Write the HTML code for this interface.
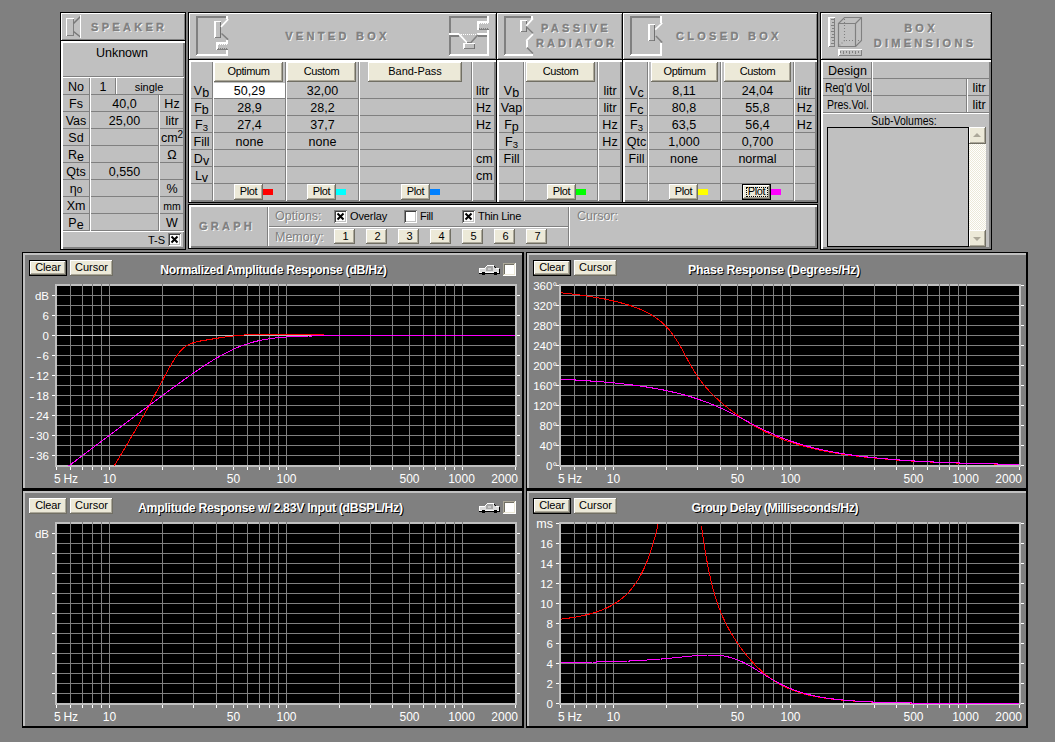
<!DOCTYPE html><html><head><meta charset="utf-8"><title>Speaker Box</title><style>
html,body{margin:0;padding:0}
body{width:1055px;height:742px;background:#808080;position:relative;overflow:hidden;font-family:"Liberation Sans", sans-serif;}
body>div,body>svg{position:absolute;}
.t{white-space:nowrap;letter-spacing:0;overflow:visible}
.sub{position:relative;top:2px}
.sup{font-size:10px;position:relative;top:-4px}
.gt{font-weight:bold;font-size:12.3px;color:#fff;text-shadow:1px 1px 0 #000;text-align:left}
.mn{display:inline-block;transform:scaleX(1.4);margin-right:2px}
.sb{position:relative;top:1.5px}
.sb3{font-size:9.5px;position:relative;top:2px}
</style></head><body>
<div style="left:60px;top:12px;width:126px;height:29px;background:#000;"></div>
<div style="left:61px;top:13px;width:124px;height:27px;background:#c0c0c0;"></div>
<div style="left:61px;top:13px;width:124px;height:1px;background:#fff;"></div>
<div style="left:61px;top:13px;width:1px;height:27px;background:#fff;"></div>
<div style="left:62px;top:39px;width:123px;height:1px;background:#808080;"></div>
<div style="left:184px;top:14px;width:1px;height:26px;background:#808080;"></div>
<svg style="left:64px;top:13px" width="20" height="26" viewBox="0 0 20 26" shape-rendering="crispEdges">
<path d="M2.5,22.5V5.5H9.5" stroke="#fff" fill="none"/><path d="M2.5,22.5H9.5V5.5" stroke="#808080" fill="none"/>
<path d="M9.5,10.5L16.5,3.5M9.5,18.5L16.5,24" stroke="#787878" stroke-width="1.5" fill="none" shape-rendering="auto"/>
<path d="M16.5,2V25" stroke="#fff" fill="none"/></svg>
<div class="t " style="left:91px;top:14px;width:98px;height:27px;line-height:27px;text-align:left;font-size:11px;color:#808080;font-weight:bold;letter-spacing:3.3px;text-shadow:1px 1px 0 #fff;-webkit-text-stroke:0.35px #808080;">SPEAKER</div>
<div style="left:60px;top:40px;width:126px;height:210px;background:#000;"></div>
<div style="left:61px;top:41px;width:124px;height:208px;background:#c0c0c0;"></div>
<div style="left:61px;top:41px;width:124px;height:2px;background:#fff;"></div>
<div style="left:61px;top:41px;width:2px;height:208px;background:#fff;"></div>
<div style="left:63px;top:247px;width:122px;height:2px;background:#808080;"></div>
<div style="left:183px;top:43px;width:2px;height:206px;background:#808080;"></div>
<div class="t " style="left:62px;top:44px;width:120px;height:18px;line-height:18px;text-align:center;font-size:12.5px;color:#000;">Unknown</div>
<div style="left:63px;top:76px;width:121px;height:1px;background:#808080;"></div>
<div style="left:63px;top:77px;width:121px;height:1px;background:#fff;"></div>
<div class="t " style="left:63px;top:79px;width:26px;height:16px;line-height:16px;text-align:center;font-size:12.5px;color:#000;">No</div>
<div style="left:63px;top:94px;width:121px;height:1px;background:#808080;"></div>
<div class="t " style="left:63px;top:96px;width:26px;height:16px;line-height:16px;text-align:center;font-size:12.5px;color:#000;">Fs</div>
<div style="left:63px;top:111px;width:121px;height:1px;background:#808080;"></div>
<div class="t " style="left:91px;top:96px;width:67px;height:16px;line-height:16px;text-align:center;font-size:12.5px;color:#000;">40,0</div>
<div class="t " style="left:160px;top:96px;width:24px;height:16px;line-height:16px;text-align:center;font-size:12.5px;color:#000;">Hz</div>
<div class="t " style="left:63px;top:113px;width:26px;height:16px;line-height:16px;text-align:center;font-size:12.5px;color:#000;">Vas</div>
<div style="left:63px;top:128px;width:121px;height:1px;background:#808080;"></div>
<div class="t " style="left:91px;top:113px;width:67px;height:16px;line-height:16px;text-align:center;font-size:12.5px;color:#000;">25,00</div>
<div class="t " style="left:160px;top:113px;width:24px;height:16px;line-height:16px;text-align:center;font-size:12.5px;color:#000;">litr</div>
<div class="t " style="left:63px;top:130px;width:26px;height:16px;line-height:16px;text-align:center;font-size:12.5px;color:#000;">Sd</div>
<div style="left:63px;top:145px;width:121px;height:1px;background:#808080;"></div>
<div class="t " style="left:160px;top:130px;width:24px;height:16px;line-height:16px;text-align:center;font-size:12.5px;color:#000;">cm<span class="sup">2</span></div>
<div class="t " style="left:63px;top:147px;width:26px;height:16px;line-height:16px;text-align:center;font-size:12.5px;color:#000;">R<span class="sub">e</span></div>
<div style="left:63px;top:162px;width:121px;height:1px;background:#808080;"></div>
<div class="t " style="left:160px;top:147px;width:24px;height:16px;line-height:16px;text-align:center;font-size:12.5px;color:#000;">&Omega;</div>
<div class="t " style="left:63px;top:164px;width:26px;height:16px;line-height:16px;text-align:center;font-size:12.5px;color:#000;">Qts</div>
<div style="left:63px;top:179px;width:121px;height:1px;background:#808080;"></div>
<div class="t " style="left:91px;top:164px;width:67px;height:16px;line-height:16px;text-align:center;font-size:12.5px;color:#000;">0,550</div>
<div class="t " style="left:63px;top:181px;width:26px;height:16px;line-height:16px;text-align:center;font-size:12.5px;color:#000;">&eta;<span style="font-size:10px">o</span></div>
<div style="left:63px;top:196px;width:121px;height:1px;background:#808080;"></div>
<div class="t " style="left:160px;top:181px;width:24px;height:16px;line-height:16px;text-align:center;font-size:12.5px;color:#000;">%</div>
<div class="t " style="left:63px;top:198px;width:26px;height:16px;line-height:16px;text-align:center;font-size:12.5px;color:#000;">Xm</div>
<div style="left:63px;top:213px;width:121px;height:1px;background:#808080;"></div>
<div class="t " style="left:160px;top:198px;width:24px;height:16px;line-height:16px;text-align:center;font-size:10.5px;color:#000;">mm</div>
<div class="t " style="left:63px;top:215px;width:26px;height:16px;line-height:16px;text-align:center;font-size:12.5px;color:#000;">P<span class="sub">e</span></div>
<div style="left:63px;top:230px;width:121px;height:1px;background:#808080;"></div>
<div class="t " style="left:160px;top:215px;width:24px;height:16px;line-height:16px;text-align:center;font-size:12.5px;color:#000;">W</div>
<div style="left:89px;top:78px;width:1px;height:153px;background:#808080;"></div>
<div style="left:90px;top:78px;width:1px;height:153px;background:#fff;"></div>
<div class="t " style="left:91px;top:79px;width:24px;height:16px;line-height:16px;text-align:center;font-size:12.5px;color:#000;">1</div>
<div style="left:115px;top:78px;width:1px;height:16px;background:#808080;"></div>
<div style="left:116px;top:78px;width:1px;height:16px;background:#fff;"></div>
<div class="t " style="left:116px;top:79px;width:66px;height:16px;line-height:16px;text-align:center;font-size:11px;color:#000;">single</div>
<div style="left:158px;top:95px;width:1px;height:136px;background:#808080;"></div>
<div style="left:159px;top:95px;width:1px;height:136px;background:#fff;"></div>
<div style="left:63px;top:231px;width:121px;height:1px;background:#fff;"></div>
<div class="t " style="left:119px;top:232px;width:46px;height:16px;line-height:16px;text-align:right;font-size:11px;color:#000;">T-S</div>
<div style="left:168px;top:233px;width:13px;height:13px;background:#808080;"></div>
<div style="left:169px;top:234px;width:12px;height:12px;background:#fff;"></div>
<div style="left:169px;top:234px;width:11px;height:11px;background:#404040;"></div>
<div style="left:170px;top:235px;width:10px;height:10px;background:#c0c0c0;"></div>
<div style="left:170px;top:235px;width:9px;height:9px;background:#fff;"></div>
<svg style="left:170px;top:235px" width="9" height="9" viewBox="0 0 9 9"><path d="M1.5,1.5L7.5,7.5M7.5,1.5L1.5,7.5" stroke="#000" stroke-width="2" fill="none"/></svg>
<div style="left:188px;top:12px;width:309px;height:48px;background:#000;"></div>
<div style="left:189px;top:13px;width:307px;height:46px;background:#c0c0c0;"></div>
<div style="left:189px;top:13px;width:307px;height:1px;background:#fff;"></div>
<div style="left:189px;top:13px;width:1px;height:46px;background:#fff;"></div>
<div style="left:190px;top:58px;width:306px;height:1px;background:#808080;"></div>
<div style="left:495px;top:14px;width:1px;height:45px;background:#808080;"></div>
<svg style="left:193px;top:13px" width="38" height="44" viewBox="0 0 38 44" shape-rendering="crispEdges"><rect x="3" y="3" width="2" height="40" fill="#808080"/><rect x="3" y="3" width="31" height="2" fill="#808080"/><rect x="4" y="41" width="31" height="2" fill="#fff"/><rect x="3" y="42" width="1" height="1" fill="#fff"/><rect x="33" y="3" width="2" height="3" fill="#fff"/><rect x="33" y="37" width="2" height="6" fill="#fff"/><rect x="33" y="27" width="2" height="3" fill="#fff"/><rect x="23" y="29" width="12" height="2" fill="#fff"/><rect x="23" y="29" width="2" height="8" fill="#fff"/><rect x="25" y="31" width="1" height="1" fill="#fff"/><rect x="27" y="31" width="1" height="1" fill="#fff"/><rect x="29" y="31" width="1" height="1" fill="#fff"/><rect x="31" y="31" width="1" height="1" fill="#fff"/><rect x="33" y="31" width="1" height="1" fill="#fff"/><rect x="25" y="35" width="1" height="1" fill="#808080"/><rect x="27" y="35" width="1" height="1" fill="#808080"/><rect x="29" y="35" width="1" height="1" fill="#808080"/><rect x="31" y="35" width="1" height="1" fill="#808080"/><rect x="33" y="35" width="1" height="1" fill="#808080"/><rect x="24" y="36" width="11" height="1" fill="#808080"/><rect x="21" y="8" width="7" height="1.4" fill="#fff"/><rect x="21" y="8" width="1.5" height="17" fill="#fff"/><rect x="22" y="23.5" width="6" height="1.5" fill="#808080"/><rect x="27" y="9" width="1" height="16" fill="#707070"/><path d="M28,13.8L35.2,6.2" stroke="#fff" stroke-width="1.7" fill="none" shape-rendering="auto"/><path d="M28.5,20.5L35.2,26.6" stroke="#808080" stroke-width="1.5" fill="none" shape-rendering="auto"/></svg>
<svg style="left:447px;top:13px" width="44" height="44" viewBox="0 0 44 44" shape-rendering="crispEdges"><rect x="2" y="3" width="2" height="40" fill="#808080"/><rect x="2" y="3" width="39" height="2" fill="#808080"/><rect x="3" y="41" width="39" height="2" fill="#fff"/><rect x="2" y="42" width="1" height="1" fill="#fff"/><rect x="40" y="3" width="2" height="5" fill="#fff"/><rect x="40" y="17" width="2" height="26" fill="#fff"/><rect x="30" y="8" width="12" height="2" fill="#fff"/><rect x="30" y="8" width="2" height="9" fill="#fff"/><rect x="32" y="10" width="1" height="1" fill="#fff"/><rect x="34" y="10" width="1" height="1" fill="#fff"/><rect x="36" y="10" width="1" height="1" fill="#fff"/><rect x="38" y="10" width="1" height="1" fill="#fff"/><rect x="40" y="10" width="1" height="1" fill="#fff"/><rect x="32" y="15" width="1" height="1" fill="#808080"/><rect x="34" y="15" width="1" height="1" fill="#808080"/><rect x="36" y="15" width="1" height="1" fill="#808080"/><rect x="38" y="15" width="1" height="1" fill="#808080"/><rect x="40" y="15" width="1" height="1" fill="#808080"/><rect x="32" y="16" width="10" height="1" fill="#808080"/><rect x="2" y="20" width="10" height="2" fill="#fff"/><rect x="30" y="20" width="12" height="2" fill="#fff"/><rect x="12" y="21" width="1" height="1" fill="#fff"/><rect x="14" y="21" width="1" height="1" fill="#fff"/><rect x="16" y="21" width="1" height="1" fill="#fff"/><rect x="18" y="21" width="1" height="1" fill="#fff"/><rect x="20" y="21" width="1" height="1" fill="#fff"/><rect x="22" y="21" width="1" height="1" fill="#fff"/><rect x="24" y="21" width="1" height="1" fill="#fff"/><rect x="26" y="21" width="1" height="1" fill="#fff"/><rect x="28" y="21" width="1" height="1" fill="#fff"/><rect x="4" y="22" width="8" height="2" fill="#808080"/><rect x="31" y="22" width="9" height="2" fill="#808080"/><path d="M12.1,21.2L20.3,30" stroke="#fff" stroke-width="1.7" fill="none" shape-rendering="auto"/><path d="M30.8,22L24,29.6" stroke="#808080" stroke-width="1.5" fill="none" shape-rendering="auto"/><rect x="20" y="29" width="5" height="1" fill="#808080"/><rect x="16" y="30" width="12" height="1.4" fill="#fff"/><rect x="16" y="30" width="1.5" height="6" fill="#fff"/><rect x="17" y="34.5" width="11" height="1.5" fill="#808080"/><rect x="27" y="31" width="1" height="5" fill="#707070"/></svg>
<div class="t " style="left:183px;top:13.5px;width:309px;height:44px;line-height:44px;text-align:center;font-size:11px;color:#808080;font-weight:bold;letter-spacing:3.3px;text-shadow:1px 1px 0 #fff;-webkit-text-stroke:0.35px #808080;">VENTED BOX</div>
<div style="left:188px;top:59px;width:309px;height:144px;background:#000;"></div>
<div style="left:189px;top:60px;width:307px;height:142px;background:#c0c0c0;"></div>
<div style="left:189px;top:60px;width:307px;height:2px;background:#fff;"></div>
<div style="left:189px;top:60px;width:2px;height:142px;background:#fff;"></div>
<div style="left:191px;top:200px;width:305px;height:2px;background:#808080;"></div>
<div style="left:494px;top:62px;width:2px;height:140px;background:#808080;"></div>
<div style="left:191px;top:98px;width:304px;height:1px;background:#808080;"></div>
<div style="left:191px;top:115px;width:304px;height:1px;background:#808080;"></div>
<div style="left:191px;top:132px;width:304px;height:1px;background:#808080;"></div>
<div style="left:191px;top:149px;width:304px;height:1px;background:#808080;"></div>
<div style="left:191px;top:166px;width:304px;height:1px;background:#808080;"></div>
<div style="left:191px;top:183px;width:304px;height:1px;background:#808080;"></div>
<div style="left:212px;top:62px;width:1px;height:139px;background:#808080;"></div>
<div style="left:213px;top:62px;width:1px;height:139px;background:#fff;"></div>
<div style="left:285px;top:62px;width:1px;height:139px;background:#808080;"></div>
<div style="left:286px;top:62px;width:1px;height:139px;background:#fff;"></div>
<div style="left:358px;top:62px;width:1px;height:139px;background:#808080;"></div>
<div style="left:359px;top:62px;width:1px;height:139px;background:#fff;"></div>
<div style="left:471px;top:62px;width:1px;height:139px;background:#808080;"></div>
<div style="left:472px;top:62px;width:1px;height:139px;background:#fff;"></div>
<div style="left:214px;top:62px;width:69px;height:20px;background:#716f64;"></div>
<div style="left:214px;top:62px;width:68px;height:19px;background:#fff;"></div>
<div style="left:215px;top:63px;width:67px;height:18px;background:#aca899;"></div>
<div style="left:215px;top:63px;width:66px;height:17px;background:#ece9d8;"></div>
<div class="t " style="left:214px;top:62px;width:69px;height:19px;line-height:19px;text-align:center;font-size:11px;color:#000;letter-spacing:-0.4px">Optimum</div>
<div style="left:287px;top:62px;width:69px;height:20px;background:#716f64;"></div>
<div style="left:287px;top:62px;width:68px;height:19px;background:#fff;"></div>
<div style="left:288px;top:63px;width:67px;height:18px;background:#aca899;"></div>
<div style="left:288px;top:63px;width:66px;height:17px;background:#ece9d8;"></div>
<div class="t " style="left:287px;top:62px;width:69px;height:19px;line-height:19px;text-align:center;font-size:11px;color:#000;letter-spacing:-0.4px">Custom</div>
<div style="left:368px;top:62px;width:94px;height:20px;background:#716f64;"></div>
<div style="left:368px;top:62px;width:93px;height:19px;background:#fff;"></div>
<div style="left:369px;top:63px;width:92px;height:18px;background:#aca899;"></div>
<div style="left:369px;top:63px;width:91px;height:17px;background:#ece9d8;"></div>
<div class="t " style="left:368px;top:62px;width:94px;height:19px;line-height:19px;text-align:center;font-size:11px;color:#000;letter-spacing:-0.05px">Band-Pass</div>
<div style="left:214px;top:83px;width:71px;height:15px;background:#fff;"></div>
<div class="t " style="left:191px;top:83px;width:21px;height:16px;line-height:16px;text-align:center;font-size:12.5px;color:#000;">V<span class="sb">b</span></div>
<div class="t " style="left:214px;top:83px;width:71px;height:16px;line-height:16px;text-align:center;font-size:12.5px;color:#000;">50,29</div>
<div class="t " style="left:287px;top:83px;width:71px;height:16px;line-height:16px;text-align:center;font-size:12.5px;color:#000;">32,00</div>
<div class="t " style="left:476px;top:83px;width:22px;height:16px;line-height:16px;text-align:left;font-size:12.5px;color:#000;">litr</div>
<div class="t " style="left:191px;top:100px;width:21px;height:16px;line-height:16px;text-align:center;font-size:12.5px;color:#000;">F<span class="sb">b</span></div>
<div class="t " style="left:214px;top:100px;width:71px;height:16px;line-height:16px;text-align:center;font-size:12.5px;color:#000;">28,9</div>
<div class="t " style="left:287px;top:100px;width:71px;height:16px;line-height:16px;text-align:center;font-size:12.5px;color:#000;">28,2</div>
<div class="t " style="left:476px;top:100px;width:22px;height:16px;line-height:16px;text-align:left;font-size:12.5px;color:#000;">Hz</div>
<div class="t " style="left:191px;top:117px;width:21px;height:16px;line-height:16px;text-align:center;font-size:12.5px;color:#000;">F<span class="sb3">3</span></div>
<div class="t " style="left:214px;top:117px;width:71px;height:16px;line-height:16px;text-align:center;font-size:12.5px;color:#000;">27,4</div>
<div class="t " style="left:287px;top:117px;width:71px;height:16px;line-height:16px;text-align:center;font-size:12.5px;color:#000;">37,7</div>
<div class="t " style="left:476px;top:117px;width:22px;height:16px;line-height:16px;text-align:left;font-size:12.5px;color:#000;">Hz</div>
<div class="t " style="left:191px;top:134px;width:21px;height:16px;line-height:16px;text-align:center;font-size:12.5px;color:#000;">Fill</div>
<div class="t " style="left:214px;top:134px;width:71px;height:16px;line-height:16px;text-align:center;font-size:12.5px;color:#000;">none</div>
<div class="t " style="left:287px;top:134px;width:71px;height:16px;line-height:16px;text-align:center;font-size:12.5px;color:#000;">none</div>
<div class="t " style="left:191px;top:151px;width:21px;height:16px;line-height:16px;text-align:center;font-size:12.5px;color:#000;">D<span class="sb">v</span></div>
<div class="t " style="left:476px;top:151px;width:22px;height:16px;line-height:16px;text-align:left;font-size:12.5px;color:#000;">cm</div>
<div class="t " style="left:191px;top:168px;width:21px;height:16px;line-height:16px;text-align:center;font-size:12.5px;color:#000;">L<span class="sb">v</span></div>
<div class="t " style="left:476px;top:168px;width:22px;height:16px;line-height:16px;text-align:left;font-size:12.5px;color:#000;">cm</div>
<div style="left:234px;top:184px;width:29px;height:16px;background:#716f64;"></div>
<div style="left:234px;top:184px;width:28px;height:15px;background:#fff;"></div>
<div style="left:235px;top:185px;width:27px;height:14px;background:#aca899;"></div>
<div style="left:235px;top:185px;width:26px;height:13px;background:#ece9d8;"></div>
<div class="t " style="left:234px;top:184px;width:29px;height:15px;line-height:15px;text-align:center;font-size:11px;color:#000;letter-spacing:-0.4px">Plot</div>
<div style="left:263px;top:189px;width:10px;height:6px;background:#ff0000;"></div>
<div style="left:307px;top:184px;width:29px;height:16px;background:#716f64;"></div>
<div style="left:307px;top:184px;width:28px;height:15px;background:#fff;"></div>
<div style="left:308px;top:185px;width:27px;height:14px;background:#aca899;"></div>
<div style="left:308px;top:185px;width:26px;height:13px;background:#ece9d8;"></div>
<div class="t " style="left:307px;top:184px;width:29px;height:15px;line-height:15px;text-align:center;font-size:11px;color:#000;letter-spacing:-0.4px">Plot</div>
<div style="left:336px;top:189px;width:10px;height:6px;background:#00ffff;"></div>
<div style="left:401px;top:184px;width:29px;height:16px;background:#716f64;"></div>
<div style="left:401px;top:184px;width:28px;height:15px;background:#fff;"></div>
<div style="left:402px;top:185px;width:27px;height:14px;background:#aca899;"></div>
<div style="left:402px;top:185px;width:26px;height:13px;background:#ece9d8;"></div>
<div class="t " style="left:401px;top:184px;width:29px;height:15px;line-height:15px;text-align:center;font-size:11px;color:#000;letter-spacing:-0.4px">Plot</div>
<div style="left:430px;top:189px;width:10px;height:6px;background:#0080ff;"></div>
<div style="left:496px;top:12px;width:127px;height:48px;background:#000;"></div>
<div style="left:497px;top:13px;width:125px;height:46px;background:#c0c0c0;"></div>
<div style="left:497px;top:13px;width:125px;height:1px;background:#fff;"></div>
<div style="left:497px;top:13px;width:1px;height:46px;background:#fff;"></div>
<div style="left:498px;top:58px;width:124px;height:1px;background:#808080;"></div>
<div style="left:621px;top:14px;width:1px;height:45px;background:#808080;"></div>
<svg style="left:502px;top:13px" width="34" height="44" viewBox="0 0 34 44" shape-rendering="crispEdges"><rect x="2" y="3" width="2" height="40" fill="#808080"/><rect x="2" y="3" width="28" height="2" fill="#808080"/><rect x="3" y="41" width="28" height="2" fill="#fff"/><rect x="2" y="42" width="1" height="1" fill="#fff"/><rect x="29" y="3" width="2" height="3" fill="#fff"/><rect x="18" y="7" width="7" height="1.4" fill="#fff"/><rect x="18" y="7" width="1.5" height="12" fill="#fff"/><rect x="19" y="17.5" width="6" height="1.5" fill="#808080"/><rect x="24" y="8" width="1" height="11" fill="#707070"/><path d="M24.2,12.8L31,5.4" stroke="#fff" stroke-width="1.7" fill="none" shape-rendering="auto"/><path d="M24.8,14.2L31,20.2" stroke="#808080" stroke-width="1.5" fill="none" shape-rendering="auto"/><path d="M31,21.2L24.2,27.8" stroke="#fff" stroke-width="1.7" fill="none" shape-rendering="auto"/><rect x="24" y="28" width="1.5" height="7" fill="#fff"/><path d="M25,34.5L31,40.5" stroke="#808080" stroke-width="1.5" fill="none" shape-rendering="auto"/></svg>
<div class="t " style="left:541px;top:20px;width:84px;height:16px;line-height:16px;text-align:left;font-size:11px;color:#808080;font-weight:bold;letter-spacing:3.3px;text-shadow:1px 1px 0 #fff;-webkit-text-stroke:0.35px #808080;">PASSIVE</div>
<div class="t " style="left:536px;top:35px;width:84px;height:16px;line-height:16px;text-align:left;font-size:11px;color:#808080;font-weight:bold;letter-spacing:3.0px;text-shadow:1px 1px 0 #fff;-webkit-text-stroke:0.35px #808080;">RADIATOR</div>
<div style="left:496px;top:59px;width:127px;height:144px;background:#000;"></div>
<div style="left:497px;top:60px;width:125px;height:142px;background:#c0c0c0;"></div>
<div style="left:497px;top:60px;width:125px;height:2px;background:#fff;"></div>
<div style="left:497px;top:60px;width:2px;height:142px;background:#fff;"></div>
<div style="left:499px;top:200px;width:123px;height:2px;background:#808080;"></div>
<div style="left:620px;top:62px;width:2px;height:140px;background:#808080;"></div>
<div style="left:499px;top:98px;width:121px;height:1px;background:#808080;"></div>
<div style="left:499px;top:115px;width:121px;height:1px;background:#808080;"></div>
<div style="left:499px;top:132px;width:121px;height:1px;background:#808080;"></div>
<div style="left:499px;top:149px;width:121px;height:1px;background:#808080;"></div>
<div style="left:499px;top:166px;width:121px;height:1px;background:#808080;"></div>
<div style="left:499px;top:183px;width:121px;height:1px;background:#808080;"></div>
<div style="left:523px;top:62px;width:1px;height:139px;background:#808080;"></div>
<div style="left:524px;top:62px;width:1px;height:139px;background:#fff;"></div>
<div style="left:597px;top:62px;width:1px;height:139px;background:#808080;"></div>
<div style="left:598px;top:62px;width:1px;height:139px;background:#fff;"></div>
<div style="left:526px;top:62px;width:69px;height:20px;background:#716f64;"></div>
<div style="left:526px;top:62px;width:68px;height:19px;background:#fff;"></div>
<div style="left:527px;top:63px;width:67px;height:18px;background:#aca899;"></div>
<div style="left:527px;top:63px;width:66px;height:17px;background:#ece9d8;"></div>
<div class="t " style="left:526px;top:62px;width:69px;height:19px;line-height:19px;text-align:center;font-size:11px;color:#000;letter-spacing:-0.4px">Custom</div>
<div class="t " style="left:500px;top:83px;width:23px;height:16px;line-height:16px;text-align:center;font-size:12.5px;color:#000;">V<span class="sb">b</span></div>
<div class="t " style="left:599px;top:83px;width:22px;height:16px;line-height:16px;text-align:center;font-size:12.5px;color:#000;">litr</div>
<div class="t " style="left:500px;top:100px;width:23px;height:16px;line-height:16px;text-align:center;font-size:12.5px;color:#000;">Vap</div>
<div class="t " style="left:599px;top:100px;width:22px;height:16px;line-height:16px;text-align:center;font-size:12.5px;color:#000;">litr</div>
<div class="t " style="left:500px;top:117px;width:23px;height:16px;line-height:16px;text-align:center;font-size:12.5px;color:#000;">F<span class="sb">p</span></div>
<div class="t " style="left:599px;top:117px;width:22px;height:16px;line-height:16px;text-align:center;font-size:12.5px;color:#000;">Hz</div>
<div class="t " style="left:500px;top:134px;width:23px;height:16px;line-height:16px;text-align:center;font-size:12.5px;color:#000;">F<span class="sb3">3</span></div>
<div class="t " style="left:599px;top:134px;width:22px;height:16px;line-height:16px;text-align:center;font-size:12.5px;color:#000;">Hz</div>
<div class="t " style="left:500px;top:151px;width:23px;height:16px;line-height:16px;text-align:center;font-size:12.5px;color:#000;">Fill</div>
<div style="left:547px;top:184px;width:29px;height:16px;background:#716f64;"></div>
<div style="left:547px;top:184px;width:28px;height:15px;background:#fff;"></div>
<div style="left:548px;top:185px;width:27px;height:14px;background:#aca899;"></div>
<div style="left:548px;top:185px;width:26px;height:13px;background:#ece9d8;"></div>
<div class="t " style="left:547px;top:184px;width:29px;height:15px;line-height:15px;text-align:center;font-size:11px;color:#000;letter-spacing:-0.4px">Plot</div>
<div style="left:576px;top:189px;width:10px;height:6px;background:#00ff00;"></div>
<div style="left:622px;top:12px;width:196px;height:48px;background:#000;"></div>
<div style="left:623px;top:13px;width:194px;height:46px;background:#c0c0c0;"></div>
<div style="left:623px;top:13px;width:194px;height:1px;background:#fff;"></div>
<div style="left:623px;top:13px;width:1px;height:46px;background:#fff;"></div>
<div style="left:624px;top:58px;width:193px;height:1px;background:#808080;"></div>
<div style="left:816px;top:14px;width:1px;height:45px;background:#808080;"></div>
<svg style="left:628px;top:13px" width="38" height="44" viewBox="0 0 38 44" shape-rendering="crispEdges"><rect x="2" y="3" width="2" height="40" fill="#808080"/><rect x="2" y="3" width="31" height="2" fill="#808080"/><rect x="3" y="41" width="31" height="2" fill="#fff"/><rect x="2" y="42" width="1" height="1" fill="#fff"/><rect x="32" y="3" width="2" height="7" fill="#fff"/><rect x="32" y="30" width="2" height="13" fill="#fff"/><rect x="20" y="11" width="7" height="1.4" fill="#fff"/><rect x="20" y="11" width="1.5" height="17" fill="#fff"/><rect x="21" y="26.5" width="6" height="1.5" fill="#808080"/><rect x="26" y="12" width="1" height="16" fill="#707070"/><path d="M34.2,10L27.2,16.6" stroke="#fff" stroke-width="1.7" fill="none" shape-rendering="auto"/><path d="M27.9,22.9L34.2,29.6" stroke="#808080" stroke-width="1.5" fill="none" shape-rendering="auto"/></svg>
<div class="t " style="left:676px;top:14px;width:148px;height:44px;line-height:44px;text-align:left;font-size:11px;color:#808080;font-weight:bold;letter-spacing:3.3px;text-shadow:1px 1px 0 #fff;-webkit-text-stroke:0.35px #808080;">CLOSED BOX</div>
<div style="left:622px;top:59px;width:196px;height:144px;background:#000;"></div>
<div style="left:623px;top:60px;width:194px;height:142px;background:#c0c0c0;"></div>
<div style="left:623px;top:60px;width:194px;height:2px;background:#fff;"></div>
<div style="left:623px;top:60px;width:2px;height:142px;background:#fff;"></div>
<div style="left:625px;top:200px;width:192px;height:2px;background:#808080;"></div>
<div style="left:815px;top:62px;width:2px;height:140px;background:#808080;"></div>
<div style="left:625px;top:98px;width:190px;height:1px;background:#808080;"></div>
<div style="left:625px;top:115px;width:190px;height:1px;background:#808080;"></div>
<div style="left:625px;top:132px;width:190px;height:1px;background:#808080;"></div>
<div style="left:625px;top:149px;width:190px;height:1px;background:#808080;"></div>
<div style="left:625px;top:166px;width:190px;height:1px;background:#808080;"></div>
<div style="left:625px;top:183px;width:190px;height:1px;background:#808080;"></div>
<div style="left:647px;top:62px;width:1px;height:139px;background:#808080;"></div>
<div style="left:648px;top:62px;width:1px;height:139px;background:#fff;"></div>
<div style="left:720px;top:62px;width:1px;height:139px;background:#808080;"></div>
<div style="left:721px;top:62px;width:1px;height:139px;background:#fff;"></div>
<div style="left:793px;top:62px;width:1px;height:139px;background:#808080;"></div>
<div style="left:794px;top:62px;width:1px;height:139px;background:#fff;"></div>
<div style="left:651px;top:62px;width:67px;height:20px;background:#716f64;"></div>
<div style="left:651px;top:62px;width:66px;height:19px;background:#fff;"></div>
<div style="left:652px;top:63px;width:65px;height:18px;background:#aca899;"></div>
<div style="left:652px;top:63px;width:64px;height:17px;background:#ece9d8;"></div>
<div class="t " style="left:651px;top:62px;width:67px;height:19px;line-height:19px;text-align:center;font-size:11px;color:#000;letter-spacing:-0.4px">Optimum</div>
<div style="left:724px;top:62px;width:67px;height:20px;background:#716f64;"></div>
<div style="left:724px;top:62px;width:66px;height:19px;background:#fff;"></div>
<div style="left:725px;top:63px;width:65px;height:18px;background:#aca899;"></div>
<div style="left:725px;top:63px;width:64px;height:17px;background:#ece9d8;"></div>
<div class="t " style="left:724px;top:62px;width:67px;height:19px;line-height:19px;text-align:center;font-size:11px;color:#000;letter-spacing:-0.4px">Custom</div>
<div class="t " style="left:626px;top:83px;width:21px;height:16px;line-height:16px;text-align:center;font-size:12.5px;color:#000;">V<span class="sb">c</span></div>
<div class="t " style="left:649px;top:83px;width:70px;height:16px;line-height:16px;text-align:center;font-size:12.5px;color:#000;">8,11</div>
<div class="t " style="left:722px;top:83px;width:71px;height:16px;line-height:16px;text-align:center;font-size:12.5px;color:#000;">24,04</div>
<div class="t " style="left:794px;top:83px;width:21px;height:16px;line-height:16px;text-align:center;font-size:12.5px;color:#000;">litr</div>
<div class="t " style="left:626px;top:100px;width:21px;height:16px;line-height:16px;text-align:center;font-size:12.5px;color:#000;">F<span class="sb">c</span></div>
<div class="t " style="left:649px;top:100px;width:70px;height:16px;line-height:16px;text-align:center;font-size:12.5px;color:#000;">80,8</div>
<div class="t " style="left:722px;top:100px;width:71px;height:16px;line-height:16px;text-align:center;font-size:12.5px;color:#000;">55,8</div>
<div class="t " style="left:794px;top:100px;width:21px;height:16px;line-height:16px;text-align:center;font-size:12.5px;color:#000;">Hz</div>
<div class="t " style="left:626px;top:117px;width:21px;height:16px;line-height:16px;text-align:center;font-size:12.5px;color:#000;">F<span class="sb3">3</span></div>
<div class="t " style="left:649px;top:117px;width:70px;height:16px;line-height:16px;text-align:center;font-size:12.5px;color:#000;">63,5</div>
<div class="t " style="left:722px;top:117px;width:71px;height:16px;line-height:16px;text-align:center;font-size:12.5px;color:#000;">56,4</div>
<div class="t " style="left:794px;top:117px;width:21px;height:16px;line-height:16px;text-align:center;font-size:12.5px;color:#000;">Hz</div>
<div class="t " style="left:626px;top:134px;width:21px;height:16px;line-height:16px;text-align:center;font-size:12.5px;color:#000;">Qtc</div>
<div class="t " style="left:649px;top:134px;width:70px;height:16px;line-height:16px;text-align:center;font-size:12.5px;color:#000;">1,000</div>
<div class="t " style="left:722px;top:134px;width:71px;height:16px;line-height:16px;text-align:center;font-size:12.5px;color:#000;">0,700</div>
<div class="t " style="left:626px;top:151px;width:21px;height:16px;line-height:16px;text-align:center;font-size:12.5px;color:#000;">Fill</div>
<div class="t " style="left:649px;top:151px;width:70px;height:16px;line-height:16px;text-align:center;font-size:12.5px;color:#000;">none</div>
<div class="t " style="left:722px;top:151px;width:71px;height:16px;line-height:16px;text-align:center;font-size:12.5px;color:#000;">normal</div>
<div style="left:669px;top:184px;width:29px;height:16px;background:#716f64;"></div>
<div style="left:669px;top:184px;width:28px;height:15px;background:#fff;"></div>
<div style="left:670px;top:185px;width:27px;height:14px;background:#aca899;"></div>
<div style="left:670px;top:185px;width:26px;height:13px;background:#ece9d8;"></div>
<div class="t " style="left:669px;top:184px;width:29px;height:15px;line-height:15px;text-align:center;font-size:11px;color:#000;letter-spacing:-0.4px">Plot</div>
<div style="left:698px;top:189px;width:10px;height:6px;background:#ffff00;"></div>
<div style="left:742px;top:184px;width:29px;height:16px;background:#000;"></div>
<div style="left:743px;top:185px;width:27px;height:14px;background:#716f64;"></div>
<div style="left:743px;top:185px;width:26px;height:13px;background:#fff;"></div>
<div style="left:744px;top:186px;width:25px;height:12px;background:#aca899;"></div>
<div style="left:744px;top:186px;width:24px;height:11px;background:#ece9d8;"></div>
<div class="t " style="left:743px;top:185px;width:27px;height:13px;line-height:13px;text-align:center;font-size:11px;color:#000;letter-spacing:-0.4px">Plot</div>
<div style="left:771px;top:189px;width:10px;height:6px;background:#ff00ff;"></div>
<div style="left:746px;top:187px;width:22px;height:10px;background:transparent;border:1px dotted #000;box-sizing:border-box"></div>
<div style="left:820px;top:12px;width:172px;height:48px;background:#000;"></div>
<div style="left:821px;top:13px;width:170px;height:46px;background:#c0c0c0;"></div>
<div style="left:821px;top:13px;width:170px;height:1px;background:#fff;"></div>
<div style="left:821px;top:13px;width:1px;height:46px;background:#fff;"></div>
<div style="left:822px;top:58px;width:169px;height:1px;background:#808080;"></div>
<div style="left:990px;top:14px;width:1px;height:45px;background:#808080;"></div>
<svg style="left:826px;top:14px" width="40" height="44" viewBox="0 0 40 44" shape-rendering="crispEdges"><rect x="2" y="3" width="7" height="1" fill="#fff"/><rect x="2" y="3" width="1.5" height="30" fill="#fff"/><rect x="8" y="4" width="1" height="29" fill="#808080"/><rect x="3" y="32" width="6" height="1" fill="#808080"/><rect x="5" y="5" width="3" height="1" fill="#808080"/><rect x="6" y="8" width="2" height="1" fill="#808080"/><rect x="5" y="11" width="3" height="1" fill="#808080"/><rect x="6" y="14" width="2" height="1" fill="#808080"/><rect x="5" y="17" width="3" height="1" fill="#808080"/><rect x="6" y="20" width="2" height="1" fill="#808080"/><rect x="5" y="23" width="3" height="1" fill="#808080"/><rect x="6" y="26" width="2" height="1" fill="#808080"/><rect x="5" y="29" width="3" height="1" fill="#808080"/><rect x="12" y="35" width="24" height="1.4" fill="#fff"/><rect x="12" y="35" width="1.5" height="7" fill="#fff"/><rect x="13" y="41" width="23" height="1" fill="#808080"/><rect x="35" y="36" width="1" height="6" fill="#808080"/><rect x="14" y="37" width="1" height="2" fill="#808080"/><rect x="17" y="37" width="1" height="3" fill="#808080"/><rect x="20" y="37" width="1" height="2" fill="#808080"/><rect x="23" y="37" width="1" height="3" fill="#808080"/><rect x="26" y="37" width="1" height="2" fill="#808080"/><rect x="29" y="37" width="1" height="3" fill="#808080"/><rect x="32" y="37" width="1" height="2" fill="#808080"/></svg>
<svg style="left:826px;top:14px" width="40" height="44" viewBox="0 0 40 44"><g transform="translate(-826,-14)" stroke="#808080" fill="none" shape-rendering="auto">
<path d="M838.5,23.5H855.5V46.5H838.5Z" stroke-width="1.2"/>
<path d="M838.5,23.5L844.5,17.5H861.5V40.5L855.5,46.5M855.5,23.5L861.5,17.5" stroke-width="1.1"/>
<path d="M844.5,19V40.5M846,40.5H861.5M844.5,40.5L838.5,46.500" stroke-dasharray="1,2" stroke-width="1.1"/></g></svg>
<div class="t " style="left:862px;top:20px;width:118px;height:16px;line-height:16px;text-align:center;font-size:11px;color:#808080;font-weight:bold;letter-spacing:3.3px;text-shadow:1px 1px 0 #fff;-webkit-text-stroke:0.35px #808080;">BOX</div>
<div class="t " style="left:866px;top:35px;width:118px;height:16px;line-height:16px;text-align:center;font-size:11px;color:#808080;font-weight:bold;letter-spacing:3.3px;text-shadow:1px 1px 0 #fff;-webkit-text-stroke:0.35px #808080;">DIMENSIONS</div>
<div style="left:820px;top:59px;width:172px;height:191px;background:#000;"></div>
<div style="left:821px;top:60px;width:170px;height:189px;background:#c0c0c0;"></div>
<div style="left:821px;top:60px;width:170px;height:2px;background:#fff;"></div>
<div style="left:821px;top:60px;width:2px;height:189px;background:#fff;"></div>
<div style="left:823px;top:247px;width:168px;height:2px;background:#808080;"></div>
<div style="left:989px;top:62px;width:2px;height:187px;background:#808080;"></div>
<div style="left:823px;top:78px;width:166px;height:1px;background:#808080;"></div>
<div style="left:823px;top:95px;width:166px;height:1px;background:#808080;"></div>
<div style="left:823px;top:112px;width:166px;height:1px;background:#808080;"></div>
<div style="left:823px;top:113px;width:166px;height:1px;background:#fff;"></div>
<div style="left:871px;top:62px;width:1px;height:50px;background:#808080;"></div>
<div style="left:872px;top:62px;width:1px;height:50px;background:#fff;"></div>
<div style="left:966px;top:79px;width:1px;height:33px;background:#808080;"></div>
<div style="left:967px;top:79px;width:1px;height:33px;background:#fff;"></div>
<div class="t " style="left:824px;top:63px;width:47px;height:16px;line-height:16px;text-align:center;font-size:12.5px;color:#000;">Design</div>
<div class="t " style="left:821px;top:80px;width:49px;height:16px;line-height:16px;text-align:center;font-size:12.5px;color:#000;transform:scaleX(.84);">Req'd Vol.</div>
<div class="t " style="left:823px;top:97px;width:49px;height:16px;line-height:16px;text-align:center;font-size:12.5px;color:#000;transform:scaleX(.84);">Pres.Vol.</div>
<div class="t " style="left:968px;top:80px;width:22px;height:16px;line-height:16px;text-align:center;font-size:12.5px;color:#000;">litr</div>
<div class="t " style="left:968px;top:97px;width:22px;height:16px;line-height:16px;text-align:center;font-size:12.5px;color:#000;">litr</div>
<div class="t " style="left:824px;top:113px;width:160px;height:16px;line-height:16px;text-align:center;font-size:12.5px;color:#000;transform:scaleX(.84);">Sub-Volumes:</div>
<div style="left:827px;top:127px;width:142px;height:120px;background:#000;"></div>
<div style="left:828px;top:128px;width:140px;height:118px;background:#c0c0c0;"></div>
<div style="left:969px;top:127px;width:17px;height:120px;background:#f6f4ec;background-image:repeating-conic-gradient(#fff 0 25%,#ece9d8 0 50%);background-size:2px 2px"></div>
<div style="left:969px;top:127px;width:17px;height:17px;background:#716f64;"></div>
<div style="left:969px;top:127px;width:16px;height:16px;background:#fff;"></div>
<div style="left:970px;top:128px;width:15px;height:15px;background:#aca899;"></div>
<div style="left:970px;top:128px;width:14px;height:14px;background:#ece9d8;"></div>
<svg style="left:969px;top:127px" width="17" height="17" viewBox="0 0 17 17"><polygon points="4,10 8,6 12,10" fill="#aca899"/></svg>
<div style="left:969px;top:230px;width:17px;height:17px;background:#716f64;"></div>
<div style="left:969px;top:230px;width:16px;height:16px;background:#fff;"></div>
<div style="left:970px;top:231px;width:15px;height:15px;background:#aca899;"></div>
<div style="left:970px;top:231px;width:14px;height:14px;background:#ece9d8;"></div>
<svg style="left:969px;top:230px" width="17" height="17" viewBox="0 0 17 17"><polygon points="4,7 8,11 12,7" fill="#aca899"/></svg>
<div style="left:188px;top:204px;width:630px;height:45px;background:#000;"></div>
<div style="left:189px;top:205px;width:628px;height:43px;background:#c0c0c0;"></div>
<div style="left:189px;top:205px;width:628px;height:2px;background:#fff;"></div>
<div style="left:189px;top:205px;width:2px;height:43px;background:#fff;"></div>
<div style="left:191px;top:246px;width:626px;height:2px;background:#808080;"></div>
<div style="left:815px;top:207px;width:2px;height:41px;background:#808080;"></div>
<div class="t " style="left:188px;top:206px;width:78px;height:41px;line-height:41px;text-align:center;font-size:11px;color:#808080;font-weight:bold;letter-spacing:3.3px;text-shadow:1px 1px 0 #fff;-webkit-text-stroke:0.35px #808080;">GRAPH</div>
<div style="left:267px;top:207px;width:1px;height:39px;background:#808080;"></div>
<div style="left:268px;top:207px;width:1px;height:39px;background:#fff;"></div>
<div style="left:568px;top:207px;width:1px;height:39px;background:#808080;"></div>
<div style="left:569px;top:207px;width:1px;height:39px;background:#fff;"></div>
<div style="left:269px;top:226px;width:299px;height:1px;background:#808080;"></div>
<div style="left:269px;top:227px;width:299px;height:1px;background:#fff;"></div>
<div class="t " style="left:275px;top:207px;width:60px;height:18px;line-height:18px;text-align:left;font-size:12.5px;color:#808080;text-shadow:1px 1px 0 #fff">Options:</div>
<div class="t " style="left:275px;top:228px;width:60px;height:18px;line-height:18px;text-align:left;font-size:12.5px;color:#808080;text-shadow:1px 1px 0 #fff">Memory:</div>
<div style="left:334px;top:210px;width:13px;height:13px;background:#808080;"></div>
<div style="left:335px;top:211px;width:12px;height:12px;background:#fff;"></div>
<div style="left:335px;top:211px;width:11px;height:11px;background:#404040;"></div>
<div style="left:336px;top:212px;width:10px;height:10px;background:#c0c0c0;"></div>
<div style="left:336px;top:212px;width:9px;height:9px;background:#fff;"></div>
<svg style="left:336px;top:212px" width="9" height="9" viewBox="0 0 9 9"><path d="M1.5,1.5L7.5,7.5M7.5,1.5L1.5,7.5" stroke="#000" stroke-width="2" fill="none"/></svg>
<div class="t " style="left:350px;top:207px;width:50px;height:18px;line-height:18px;text-align:left;font-size:11px;color:#000;letter-spacing:-0.1px">Overlay</div>
<div style="left:404px;top:210px;width:13px;height:13px;background:#808080;"></div>
<div style="left:405px;top:211px;width:12px;height:12px;background:#fff;"></div>
<div style="left:405px;top:211px;width:11px;height:11px;background:#404040;"></div>
<div style="left:406px;top:212px;width:10px;height:10px;background:#c0c0c0;"></div>
<div style="left:406px;top:212px;width:9px;height:9px;background:#fff;"></div>
<div class="t " style="left:420px;top:207px;width:50px;height:18px;line-height:18px;text-align:left;font-size:11px;color:#000;letter-spacing:-0.3px">Fill</div>
<div style="left:462px;top:210px;width:13px;height:13px;background:#808080;"></div>
<div style="left:463px;top:211px;width:12px;height:12px;background:#fff;"></div>
<div style="left:463px;top:211px;width:11px;height:11px;background:#404040;"></div>
<div style="left:464px;top:212px;width:10px;height:10px;background:#c0c0c0;"></div>
<div style="left:464px;top:212px;width:9px;height:9px;background:#fff;"></div>
<svg style="left:464px;top:212px" width="9" height="9" viewBox="0 0 9 9"><path d="M1.5,1.5L7.5,7.5M7.5,1.5L1.5,7.5" stroke="#000" stroke-width="2" fill="none"/></svg>
<div class="t " style="left:478px;top:207px;width:60px;height:18px;line-height:18px;text-align:left;font-size:11px;color:#000;letter-spacing:-0.25px">Thin Line</div>
<div style="left:334px;top:229px;width:21px;height:15px;background:#716f64;"></div>
<div style="left:334px;top:229px;width:20px;height:14px;background:#fff;"></div>
<div style="left:335px;top:230px;width:19px;height:13px;background:#aca899;"></div>
<div style="left:335px;top:230px;width:18px;height:12px;background:#ece9d8;"></div>
<div class="t " style="left:334px;top:229px;width:21px;height:14px;line-height:14px;text-align:center;font-size:11px;color:#000;padding-left:1px">1</div>
<div style="left:366px;top:229px;width:21px;height:15px;background:#716f64;"></div>
<div style="left:366px;top:229px;width:20px;height:14px;background:#fff;"></div>
<div style="left:367px;top:230px;width:19px;height:13px;background:#aca899;"></div>
<div style="left:367px;top:230px;width:18px;height:12px;background:#ece9d8;"></div>
<div class="t " style="left:366px;top:229px;width:21px;height:14px;line-height:14px;text-align:center;font-size:11px;color:#000;padding-left:1px">2</div>
<div style="left:398px;top:229px;width:21px;height:15px;background:#716f64;"></div>
<div style="left:398px;top:229px;width:20px;height:14px;background:#fff;"></div>
<div style="left:399px;top:230px;width:19px;height:13px;background:#aca899;"></div>
<div style="left:399px;top:230px;width:18px;height:12px;background:#ece9d8;"></div>
<div class="t " style="left:398px;top:229px;width:21px;height:14px;line-height:14px;text-align:center;font-size:11px;color:#000;padding-left:1px">3</div>
<div style="left:430px;top:229px;width:21px;height:15px;background:#716f64;"></div>
<div style="left:430px;top:229px;width:20px;height:14px;background:#fff;"></div>
<div style="left:431px;top:230px;width:19px;height:13px;background:#aca899;"></div>
<div style="left:431px;top:230px;width:18px;height:12px;background:#ece9d8;"></div>
<div class="t " style="left:430px;top:229px;width:21px;height:14px;line-height:14px;text-align:center;font-size:11px;color:#000;padding-left:1px">4</div>
<div style="left:462px;top:229px;width:21px;height:15px;background:#716f64;"></div>
<div style="left:462px;top:229px;width:20px;height:14px;background:#fff;"></div>
<div style="left:463px;top:230px;width:19px;height:13px;background:#aca899;"></div>
<div style="left:463px;top:230px;width:18px;height:12px;background:#ece9d8;"></div>
<div class="t " style="left:462px;top:229px;width:21px;height:14px;line-height:14px;text-align:center;font-size:11px;color:#000;padding-left:1px">5</div>
<div style="left:494px;top:229px;width:21px;height:15px;background:#716f64;"></div>
<div style="left:494px;top:229px;width:20px;height:14px;background:#fff;"></div>
<div style="left:495px;top:230px;width:19px;height:13px;background:#aca899;"></div>
<div style="left:495px;top:230px;width:18px;height:12px;background:#ece9d8;"></div>
<div class="t " style="left:494px;top:229px;width:21px;height:14px;line-height:14px;text-align:center;font-size:11px;color:#000;padding-left:1px">6</div>
<div style="left:526px;top:229px;width:21px;height:15px;background:#716f64;"></div>
<div style="left:526px;top:229px;width:20px;height:14px;background:#fff;"></div>
<div style="left:527px;top:230px;width:19px;height:13px;background:#aca899;"></div>
<div style="left:527px;top:230px;width:18px;height:12px;background:#ece9d8;"></div>
<div class="t " style="left:526px;top:229px;width:21px;height:14px;line-height:14px;text-align:center;font-size:11px;color:#000;padding-left:1px">7</div>
<div class="t " style="left:577px;top:207px;width:60px;height:18px;line-height:18px;text-align:left;font-size:12.5px;color:#808080;text-shadow:1px 1px 0 #fff">Cursor:</div>
<div style="left:22px;top:252px;width:502px;height:238px;background:#000;"></div>
<div style="left:23px;top:253px;width:499px;height:235px;background:#c0c0c0;"></div>
<div style="left:25px;top:255px;width:497px;height:233px;background:#808080;"></div>
<div style="left:29px;top:260px;width:38px;height:16px;background:#000;"></div>
<div style="left:30px;top:261px;width:36px;height:14px;background:#716f64;"></div>
<div style="left:30px;top:261px;width:35px;height:13px;background:#fff;"></div>
<div style="left:31px;top:262px;width:34px;height:12px;background:#aca899;"></div>
<div style="left:31px;top:262px;width:33px;height:11px;background:#ece9d8;"></div>
<div class="t " style="left:30px;top:261px;width:36px;height:13px;line-height:13px;text-align:center;font-size:11px;color:#000;letter-spacing:-0.2px">Clear</div>
<div style="left:70px;top:260px;width:43px;height:16px;background:#716f64;"></div>
<div style="left:70px;top:260px;width:42px;height:15px;background:#fff;"></div>
<div style="left:71px;top:261px;width:41px;height:14px;background:#aca899;"></div>
<div style="left:71px;top:261px;width:40px;height:13px;background:#ece9d8;"></div>
<div class="t " style="left:70px;top:260px;width:43px;height:15px;line-height:15px;text-align:center;font-size:11px;color:#000;letter-spacing:0">Cursor</div>
<div class="t gt" style="left:160.2px;top:261px;height:18px;line-height:18px;letter-spacing:-0.318px">Normalized Amplitude Response (dB/Hz)</div>
<div style="left:487px;top:265px;width:7px;height:1px;background:#fff;"></div>
<div style="left:486px;top:266px;width:1px;height:1px;background:#fff;"></div>
<div style="left:485px;top:267px;width:1px;height:1px;background:#fff;"></div>
<div style="left:494px;top:266px;width:1px;height:1px;background:#000;"></div>
<div style="left:495px;top:267px;width:1px;height:1px;background:#000;"></div>
<div style="left:487px;top:266px;width:7px;height:2px;background:#a4a4a4;"></div>
<div style="left:486px;top:267px;width:1px;height:1px;background:#a4a4a4;"></div>
<div style="left:493px;top:266px;width:1px;height:2px;background:#e8e8e8;"></div>
<div style="left:479px;top:268px;width:20px;height:5px;background:#dcdcdc;"></div>
<div style="left:479px;top:268px;width:6px;height:1px;background:#fff;"></div>
<div style="left:496px;top:268px;width:3px;height:1px;background:#fff;"></div>
<div style="left:479px;top:268px;width:1px;height:5px;background:#fff;"></div>
<div style="left:486px;top:268px;width:7px;height:3px;background:#a8a8a8;"></div>
<div style="left:488px;top:268px;width:3px;height:2px;background:#c8c8c8;"></div>
<div style="left:479px;top:272px;width:20px;height:1px;background:#fff;"></div>
<div style="left:479px;top:273px;width:21px;height:1px;background:#000;"></div>
<div style="left:499px;top:269px;width:1px;height:5px;background:#000;"></div>
<div style="left:482px;top:272px;width:3px;height:3px;background:#000;"></div>
<div style="left:494px;top:272px;width:3px;height:3px;background:#000;"></div>
<div style="left:503px;top:263px;width:13px;height:13px;background:#fff;"></div>
<div style="left:503px;top:263px;width:12px;height:12px;background:#aca899;"></div>
<div style="left:504px;top:264px;width:11px;height:11px;background:#ece9d8;"></div>
<div style="left:504px;top:264px;width:10px;height:10px;background:#716f64;"></div>
<div style="left:505px;top:265px;width:9px;height:9px;background:#fff;"></div>
<div style="left:55px;top:284px;width:462px;height:183px;background:#c0c0c0;"></div>
<div style="left:57px;top:286px;width:458px;height:179px;background:#000;"></div>
<svg style="left:57px;top:286px" width="458" height="179" viewBox="0 0 458 179" shape-rendering="crispEdges"><path d="M13.5,0V179M25.5,0V179M35.5,0V179M44.5,0V179M52.5,0V179M105.5,0V179M136.5,0V179M159.5,0V179M176.5,0V179M190.5,0V179M202.5,0V179M212.5,0V179M221.5,0V179M229.5,0V179M282.5,0V179M313.5,0V179M335.5,0V179M352.5,0V179M366.5,0V179M378.5,0V179M388.5,0V179M397.5,0V179M405.5,0V179M0,9.5H458M0,19.5H458M0,29.5H458M0,39.5H458M0,49.5H458M0,59.5H458M0,69.5H458M0,79.5H458M0,89.5H458M0,99.5H458M0,109.5H458M0,119.5H458M0,129.5H458M0,139.5H458M0,149.5H458M0,159.5H458M0,169.5H458" stroke="#808080" fill="none"/><path d="M0,49.5H458" stroke="#c0c0c0" fill="none"/></svg>
<svg style="left:57px;top:286px" width="458" height="180" viewBox="0 0 458 180" shape-rendering="crispEdges"><path d="M56.5,180.9L57.5,179.2L58.5,177.6L59.5,176.0L60.5,174.3L61.5,172.7L62.5,171.0L63.5,169.3L64.5,167.7L65.5,166.0L66.5,164.3L67.5,162.7L68.5,161.0L69.5,159.3L70.5,157.6L71.5,155.9L72.5,154.2L73.5,152.5L74.5,150.8L75.5,149.1L76.5,147.3L77.5,145.6L78.5,143.9L79.5,142.1L80.5,140.4L81.5,138.6L82.5,136.9L83.5,135.1L84.5,133.3L85.5,131.5L86.5,129.7L87.5,127.9L88.5,126.1L89.5,124.3L90.5,122.5L91.5,120.6L92.5,118.8L93.5,117.0L94.5,115.1L95.5,113.2L96.5,111.4L97.5,109.5L98.5,107.6L99.5,105.7L100.5,103.9L101.5,102.0L102.5,100.1L103.5,98.2L104.5,96.3L105.5,94.4L106.5,92.5L107.5,90.6L108.5,88.7L109.5,86.9L110.5,85.0L111.5,83.2L112.5,81.4L113.5,79.7L114.5,77.9L115.5,76.2L116.5,74.6L117.5,73.0L118.5,71.5L119.5,70.0L120.5,68.7L121.5,67.4L122.5,66.1L123.5,65.0L124.5,63.9L125.5,62.9L126.5,62.0L127.5,61.2L128.5,60.5L129.5,59.8L130.5,59.2L131.5,58.7L132.5,58.2L133.5,57.7L134.5,57.3L135.5,57.0L136.5,56.7L137.5,56.4L138.5,56.1L139.5,55.9L140.5,55.6L141.5,55.4L142.5,55.2L143.5,55.0L144.5,54.8L145.5,54.7L146.5,54.5L147.5,54.3L148.5,54.2L149.5,54.0L150.5,53.8L151.5,53.7L152.5,53.5L153.5,53.3L154.5,53.2L155.5,53.0L156.5,52.8L157.5,52.7L158.5,52.5L159.5,52.4L160.5,52.2L161.5,52.0L162.5,51.9L163.5,51.7L164.5,51.6L165.5,51.4L166.5,51.3L167.5,51.1L168.5,51.0L169.5,50.9L170.5,50.7L171.5,50.6L172.5,50.5L173.5,50.3L174.5,50.2L175.5,50.1L176.5,50.0L177.5,49.9L178.5,49.8L179.5,49.7L180.5,49.6L181.5,49.5L182.5,49.4L183.5,49.3L184.5,49.2L185.5,49.1L186.5,49.1L187.5,49.0L188.5,48.9L189.5,48.9L190.5,48.8L191.5,48.7L192.5,48.7L193.5,48.6L194.5,48.6L195.5,48.6L196.5,48.5L197.5,48.5L198.5,48.5L199.5,48.4L200.5,48.4L201.5,48.4L202.5,48.4L203.5,48.3L204.5,48.3L205.5,48.3L206.5,48.3L207.5,48.3L208.5,48.3L209.5,48.3L210.5,48.3L211.5,48.3L212.5,48.3L213.5,48.3L214.5,48.3L215.5,48.3L216.5,48.3L217.5,48.3L218.5,48.3L219.5,48.3L220.5,48.3L221.5,48.3L222.5,48.3L223.5,48.3L224.5,48.4L225.5,48.4L226.5,48.4L227.5,48.4L228.5,48.4L229.5,48.4L230.5,48.4L231.5,48.4L232.5,48.5L233.5,48.5L234.5,48.5L235.5,48.5L236.5,48.5L237.5,48.5L238.5,48.5L239.5,48.6L240.5,48.6L241.5,48.6L242.5,48.6L243.5,48.6L244.5,48.6L245.5,48.7L246.5,48.7L247.5,48.7L248.5,48.7L249.5,48.7L250.5,48.7L251.5,48.7L252.5,48.8L253.5,48.8L254.5,48.8L255.5,48.8L256.5,48.8L257.5,48.8L258.5,48.8L259.5,48.9L260.5,48.9L261.5,48.9L262.5,48.9L263.5,48.9L264.5,48.9L265.5,48.9L266.5,49.0L267.5,49.0L268.5,49.0L269.5,49.0L270.5,49.0L271.5,49.0L272.5,49.0L273.5,49.0L274.5,49.0L275.5,49.1L276.5,49.1L277.5,49.1L278.5,49.1L279.5,49.1L280.5,49.1L281.5,49.1L282.5,49.1L283.5,49.1L284.5,49.1L285.5,49.1L286.5,49.2L287.5,49.2L288.5,49.2L289.5,49.2L290.5,49.2L291.5,49.2L292.5,49.2L293.5,49.2L294.5,49.2L295.5,49.2L296.5,49.2L297.5,49.2L298.5,49.2L299.5,49.2L300.5,49.3L301.5,49.3L302.5,49.3L303.5,49.3L304.5,49.3L305.5,49.3L306.5,49.3L307.5,49.3L308.5,49.3L309.5,49.3L310.5,49.3L311.5,49.3L312.5,49.3L313.5,49.3L314.5,49.3L315.5,49.3L316.5,49.3L317.5,49.3L318.5,49.3L319.5,49.3L320.5,49.3L321.5,49.4L322.5,49.4L323.5,49.4L324.5,49.4L325.5,49.4L326.5,49.4L327.5,49.4L328.5,49.4L329.5,49.4L330.5,49.4L331.5,49.4L332.5,49.4L333.5,49.4L334.5,49.4L335.5,49.4L336.5,49.4L337.5,49.4L338.5,49.4L339.5,49.4L340.5,49.4L341.5,49.4L342.5,49.4L343.5,49.4L344.5,49.4L345.5,49.4L346.5,49.4L347.5,49.4L348.5,49.4L349.5,49.4L350.5,49.4L351.5,49.4L352.5,49.4L353.5,49.4L354.5,49.4L355.5,49.4L356.5,49.4L357.5,49.4L358.5,49.4L359.5,49.4L360.5,49.4L361.5,49.4L362.5,49.4L363.5,49.4L364.5,49.5L365.5,49.5L366.5,49.5L367.5,49.5L368.5,49.5L369.5,49.5L370.5,49.5L371.5,49.5L372.5,49.5L373.5,49.5L374.5,49.5L375.5,49.5L376.5,49.5L377.5,49.5L378.5,49.5L379.5,49.5L380.5,49.5L381.5,49.5L382.5,49.5L383.5,49.5L384.5,49.5L385.5,49.5L386.5,49.5L387.5,49.5L388.5,49.5L389.5,49.5L390.5,49.5L391.5,49.5L392.5,49.5L393.5,49.5L394.5,49.5L395.5,49.5L396.5,49.5L397.5,49.5L398.5,49.5L399.5,49.5L400.5,49.5L401.5,49.5L402.5,49.5L403.5,49.5L404.5,49.5L405.5,49.5L406.5,49.5L407.5,49.5L408.5,49.5L409.5,49.5L410.5,49.5L411.5,49.5L412.5,49.5L413.5,49.5L414.5,49.5L415.5,49.5L416.5,49.5L417.5,49.5L418.5,49.5L419.5,49.5L420.5,49.5L421.5,49.5L422.5,49.5L423.5,49.5L424.5,49.5L425.5,49.5L426.5,49.5L427.5,49.5L428.5,49.5L429.5,49.5L430.5,49.5L431.5,49.5L432.5,49.5L433.5,49.5L434.5,49.5L435.5,49.5L436.5,49.5L437.5,49.5L438.5,49.5L439.5,49.5L440.5,49.5L441.5,49.5L442.5,49.5L443.5,49.5L444.5,49.5L445.5,49.5L446.5,49.5L447.5,49.5L448.5,49.5L449.5,49.5L450.5,49.5L451.5,49.5L452.5,49.5L453.5,49.5L454.5,49.5L455.5,49.5L456.5,49.5L457.5,49.5L458.5,49.5L459.5,49.5" stroke="#ff0000" fill="none" stroke-width="1" shape-rendering="crispEdges"/><path d="M9.5,181.6L10.5,180.9L11.5,180.1L12.5,179.4L13.5,178.6L14.5,177.9L15.5,177.1L16.5,176.4L17.5,175.6L18.5,174.9L19.5,174.1L20.5,173.3L21.5,172.6L22.5,171.8L23.5,171.1L24.5,170.3L25.5,169.6L26.5,168.8L27.5,168.1L28.5,167.3L29.5,166.6L30.5,165.8L31.5,165.0L32.5,164.3L33.5,163.5L34.5,162.8L35.5,162.0L36.5,161.3L37.5,160.5L38.5,159.8L39.5,159.0L40.5,158.3L41.5,157.5L42.5,156.8L43.5,156.0L44.5,155.2L45.5,154.5L46.5,153.7L47.5,153.0L48.5,152.2L49.5,151.5L50.5,150.7L51.5,150.0L52.5,149.2L53.5,148.5L54.5,147.7L55.5,147.0L56.5,146.2L57.5,145.4L58.5,144.7L59.5,143.9L60.5,143.2L61.5,142.4L62.5,141.7L63.5,140.9L64.5,140.2L65.5,139.4L66.5,138.7L67.5,137.9L68.5,137.2L69.5,136.4L70.5,135.7L71.5,134.9L72.5,134.2L73.5,133.4L74.5,132.7L75.5,131.9L76.5,131.2L77.5,130.4L78.5,129.7L79.5,128.9L80.5,128.1L81.5,127.4L82.5,126.6L83.5,125.9L84.5,125.1L85.5,124.4L86.5,123.7L87.5,122.9L88.5,122.2L89.5,121.4L90.5,120.7L91.5,119.9L92.5,119.2L93.5,118.4L94.5,117.7L95.5,116.9L96.5,116.2L97.5,115.4L98.5,114.7L99.5,113.9L100.5,113.2L101.5,112.5L102.5,111.7L103.5,111.0L104.5,110.2L105.5,109.5L106.5,108.7L107.5,108.0L108.5,107.3L109.5,106.5L110.5,105.8L111.5,105.1L112.5,104.3L113.5,103.6L114.5,102.8L115.5,102.1L116.5,101.4L117.5,100.7L118.5,99.9L119.5,99.2L120.5,98.5L121.5,97.7L122.5,97.0L123.5,96.3L124.5,95.6L125.5,94.9L126.5,94.1L127.5,93.4L128.5,92.7L129.5,92.0L130.5,91.3L131.5,90.6L132.5,89.9L133.5,89.2L134.5,88.5L135.5,87.8L136.5,87.1L137.5,86.4L138.5,85.7L139.5,85.0L140.5,84.3L141.5,83.6L142.5,83.0L143.5,82.3L144.5,81.6L145.5,80.9L146.5,80.3L147.5,79.6L148.5,79.0L149.5,78.3L150.5,77.7L151.5,77.0L152.5,76.4L153.5,75.8L154.5,75.2L155.5,74.5L156.5,73.9L157.5,73.3L158.5,72.7L159.5,72.1L160.5,71.5L161.5,71.0L162.5,70.4L163.5,69.8L164.5,69.3L165.5,68.7L166.5,68.2L167.5,67.6L168.5,67.1L169.5,66.6L170.5,66.1L171.5,65.6L172.5,65.1L173.5,64.6L174.5,64.1L175.5,63.6L176.5,63.2L177.5,62.7L178.5,62.3L179.5,61.9L180.5,61.4L181.5,61.0L182.5,60.6L183.5,60.2L184.5,59.8L185.5,59.5L186.5,59.1L187.5,58.8L188.5,58.4L189.5,58.1L190.5,57.8L191.5,57.4L192.5,57.1L193.5,56.8L194.5,56.5L195.5,56.3L196.5,56.0L197.5,55.7L198.5,55.5L199.5,55.2L200.5,55.0L201.5,54.8L202.5,54.6L203.5,54.3L204.5,54.1L205.5,53.9L206.5,53.8L207.5,53.6L208.5,53.4L209.5,53.2L210.5,53.1L211.5,52.9L212.5,52.8L213.5,52.6L214.5,52.5L215.5,52.3L216.5,52.2L217.5,52.1L218.5,52.0L219.5,51.9L220.5,51.8L221.5,51.7L222.5,51.6L223.5,51.5L224.5,51.4L225.5,51.3L226.5,51.2L227.5,51.1L228.5,51.1L229.5,51.0L230.5,50.9L231.5,50.9L232.5,50.8L233.5,50.7L234.5,50.7L235.5,50.6L236.5,50.6L237.5,50.5L238.5,50.5L239.5,50.4L240.5,50.4L241.5,50.4L242.5,50.3L243.5,50.3L244.5,50.2L245.5,50.2L246.5,50.2L247.5,50.1L248.5,50.1L249.5,50.1L250.5,50.1L251.5,50.0L252.5,50.0L253.5,50.0L254.5,50.0L255.5,49.9L256.5,49.9L257.5,49.9L258.5,49.9L259.5,49.9L260.5,49.9L261.5,49.8L262.5,49.8L263.5,49.8L264.5,49.8L265.5,49.8L266.5,49.8L267.5,49.8L268.5,49.7L269.5,49.7L270.5,49.7L271.5,49.7L272.5,49.7L273.5,49.7L274.5,49.7L275.5,49.7L276.5,49.7L277.5,49.7L278.5,49.7L279.5,49.7L280.5,49.6L281.5,49.6L282.5,49.6L283.5,49.6L284.5,49.6L285.5,49.6L286.5,49.6L287.5,49.6L288.5,49.6L289.5,49.6L290.5,49.6L291.5,49.6L292.5,49.6L293.5,49.6L294.5,49.6L295.5,49.6L296.5,49.6L297.5,49.6L298.5,49.6L299.5,49.6L300.5,49.6L301.5,49.6L302.5,49.6L303.5,49.6L304.5,49.6L305.5,49.6L306.5,49.5L307.5,49.5L308.5,49.5L309.5,49.5L310.5,49.5L311.5,49.5L312.5,49.5L313.5,49.5L314.5,49.5L315.5,49.5L316.5,49.5L317.5,49.5L318.5,49.5L319.5,49.5L320.5,49.5L321.5,49.5L322.5,49.5L323.5,49.5L324.5,49.5L325.5,49.5L326.5,49.5L327.5,49.5L328.5,49.5L329.5,49.5L330.5,49.5L331.5,49.5L332.5,49.5L333.5,49.5L334.5,49.5L335.5,49.5L336.5,49.5L337.5,49.5L338.5,49.5L339.5,49.5L340.5,49.5L341.5,49.5L342.5,49.5L343.5,49.5L344.5,49.5L345.5,49.5L346.5,49.5L347.5,49.5L348.5,49.5L349.5,49.5L350.5,49.5L351.5,49.5L352.5,49.5L353.5,49.5L354.5,49.5L355.5,49.5L356.5,49.5L357.5,49.5L358.5,49.5L359.5,49.5L360.5,49.5L361.5,49.5L362.5,49.5L363.5,49.5L364.5,49.5L365.5,49.5L366.5,49.5L367.5,49.5L368.5,49.5L369.5,49.5L370.5,49.5L371.5,49.5L372.5,49.5L373.5,49.5L374.5,49.5L375.5,49.5L376.5,49.5L377.5,49.5L378.5,49.5L379.5,49.5L380.5,49.5L381.5,49.5L382.5,49.5L383.5,49.5L384.5,49.5L385.5,49.5L386.5,49.5L387.5,49.5L388.5,49.5L389.5,49.5L390.5,49.5L391.5,49.5L392.5,49.5L393.5,49.5L394.5,49.5L395.5,49.5L396.5,49.5L397.5,49.5L398.5,49.5L399.5,49.5L400.5,49.5L401.5,49.5L402.5,49.5L403.5,49.5L404.5,49.5L405.5,49.5L406.5,49.5L407.5,49.5L408.5,49.5L409.5,49.5L410.5,49.5L411.5,49.5L412.5,49.5L413.5,49.5L414.5,49.5L415.5,49.5L416.5,49.5L417.5,49.5L418.5,49.5L419.5,49.5L420.5,49.5L421.5,49.5L422.5,49.5L423.5,49.5L424.5,49.5L425.5,49.5L426.5,49.5L427.5,49.5L428.5,49.5L429.5,49.5L430.5,49.5L431.5,49.5L432.5,49.5L433.5,49.5L434.5,49.5L435.5,49.5L436.5,49.5L437.5,49.5L438.5,49.5L439.5,49.5L440.5,49.5L441.5,49.5L442.5,49.5L443.5,49.5L444.5,49.5L445.5,49.5L446.5,49.5L447.5,49.5L448.5,49.5L449.5,49.5L450.5,49.5L451.5,49.5L452.5,49.5L453.5,49.5L454.5,49.5L455.5,49.5L456.5,49.5L457.5,49.5L458.5,49.5L459.5,49.5" stroke="#ff00ff" fill="none" stroke-width="1" shape-rendering="crispEdges"/></svg>
<div style="left:70px;top:284px;width:1px;height:2px;background:#808080;"></div>
<div style="left:82px;top:284px;width:1px;height:2px;background:#808080;"></div>
<div style="left:92px;top:284px;width:1px;height:2px;background:#808080;"></div>
<div style="left:101px;top:284px;width:1px;height:2px;background:#808080;"></div>
<div style="left:109px;top:284px;width:1px;height:2px;background:#808080;"></div>
<div style="left:162px;top:284px;width:1px;height:2px;background:#808080;"></div>
<div style="left:193px;top:284px;width:1px;height:2px;background:#808080;"></div>
<div style="left:216px;top:284px;width:1px;height:2px;background:#808080;"></div>
<div style="left:233px;top:284px;width:1px;height:2px;background:#808080;"></div>
<div style="left:247px;top:284px;width:1px;height:2px;background:#808080;"></div>
<div style="left:259px;top:284px;width:1px;height:2px;background:#808080;"></div>
<div style="left:269px;top:284px;width:1px;height:2px;background:#808080;"></div>
<div style="left:278px;top:284px;width:1px;height:2px;background:#808080;"></div>
<div style="left:286px;top:284px;width:1px;height:2px;background:#808080;"></div>
<div style="left:339px;top:284px;width:1px;height:2px;background:#808080;"></div>
<div style="left:370px;top:284px;width:1px;height:2px;background:#808080;"></div>
<div style="left:392px;top:284px;width:1px;height:2px;background:#808080;"></div>
<div style="left:409px;top:284px;width:1px;height:2px;background:#808080;"></div>
<div style="left:423px;top:284px;width:1px;height:2px;background:#808080;"></div>
<div style="left:435px;top:284px;width:1px;height:2px;background:#808080;"></div>
<div style="left:445px;top:284px;width:1px;height:2px;background:#808080;"></div>
<div style="left:454px;top:284px;width:1px;height:2px;background:#808080;"></div>
<div style="left:462px;top:284px;width:1px;height:2px;background:#808080;"></div>
<div style="left:56px;top:467px;width:1px;height:3px;background:#fff;"></div>
<div style="left:70px;top:467px;width:1px;height:3px;background:#fff;"></div>
<div style="left:82px;top:467px;width:1px;height:3px;background:#fff;"></div>
<div style="left:92px;top:467px;width:1px;height:3px;background:#fff;"></div>
<div style="left:101px;top:467px;width:1px;height:3px;background:#fff;"></div>
<div style="left:109px;top:467px;width:1px;height:3px;background:#fff;"></div>
<div style="left:162px;top:467px;width:1px;height:3px;background:#fff;"></div>
<div style="left:193px;top:467px;width:1px;height:3px;background:#fff;"></div>
<div style="left:216px;top:467px;width:1px;height:3px;background:#fff;"></div>
<div style="left:233px;top:467px;width:1px;height:3px;background:#fff;"></div>
<div style="left:247px;top:467px;width:1px;height:3px;background:#fff;"></div>
<div style="left:259px;top:467px;width:1px;height:3px;background:#fff;"></div>
<div style="left:269px;top:467px;width:1px;height:3px;background:#fff;"></div>
<div style="left:278px;top:467px;width:1px;height:3px;background:#fff;"></div>
<div style="left:286px;top:467px;width:1px;height:3px;background:#fff;"></div>
<div style="left:339px;top:467px;width:1px;height:3px;background:#fff;"></div>
<div style="left:370px;top:467px;width:1px;height:3px;background:#fff;"></div>
<div style="left:392px;top:467px;width:1px;height:3px;background:#fff;"></div>
<div style="left:409px;top:467px;width:1px;height:3px;background:#fff;"></div>
<div style="left:423px;top:467px;width:1px;height:3px;background:#fff;"></div>
<div style="left:435px;top:467px;width:1px;height:3px;background:#fff;"></div>
<div style="left:445px;top:467px;width:1px;height:3px;background:#fff;"></div>
<div style="left:454px;top:467px;width:1px;height:3px;background:#fff;"></div>
<div style="left:462px;top:467px;width:1px;height:3px;background:#fff;"></div>
<div style="left:515px;top:467px;width:1px;height:3px;background:#fff;"></div>
<div style="left:52px;top:295px;width:3px;height:1px;background:#fff;"></div>
<div style="left:517px;top:295px;width:3px;height:1px;background:#fff;"></div>
<div style="left:52px;top:315px;width:3px;height:1px;background:#fff;"></div>
<div style="left:517px;top:315px;width:3px;height:1px;background:#fff;"></div>
<div style="left:52px;top:335px;width:3px;height:1px;background:#fff;"></div>
<div style="left:517px;top:335px;width:3px;height:1px;background:#fff;"></div>
<div style="left:52px;top:355px;width:3px;height:1px;background:#fff;"></div>
<div style="left:517px;top:355px;width:3px;height:1px;background:#fff;"></div>
<div style="left:52px;top:375px;width:3px;height:1px;background:#fff;"></div>
<div style="left:517px;top:375px;width:3px;height:1px;background:#fff;"></div>
<div style="left:52px;top:395px;width:3px;height:1px;background:#fff;"></div>
<div style="left:517px;top:395px;width:3px;height:1px;background:#fff;"></div>
<div style="left:52px;top:415px;width:3px;height:1px;background:#fff;"></div>
<div style="left:517px;top:415px;width:3px;height:1px;background:#fff;"></div>
<div style="left:52px;top:435px;width:3px;height:1px;background:#fff;"></div>
<div style="left:517px;top:435px;width:3px;height:1px;background:#fff;"></div>
<div style="left:52px;top:455px;width:3px;height:1px;background:#fff;"></div>
<div style="left:517px;top:455px;width:3px;height:1px;background:#fff;"></div>
<div class="t " style="left:22px;top:288px;width:27px;height:16px;line-height:16px;text-align:right;font-size:11.5px;color:#fff;letter-spacing:0">dB</div>
<div class="t " style="left:22px;top:308px;width:27px;height:16px;line-height:16px;text-align:right;font-size:11.5px;color:#fff;letter-spacing:0">6</div>
<div class="t " style="left:22px;top:328px;width:27px;height:16px;line-height:16px;text-align:right;font-size:11.5px;color:#fff;letter-spacing:0">0</div>
<div class="t " style="left:22px;top:348px;width:27px;height:16px;line-height:16px;text-align:right;font-size:11.5px;color:#fff;letter-spacing:0"><span class="mn">-</span>6</div>
<div class="t " style="left:22px;top:368px;width:27px;height:16px;line-height:16px;text-align:right;font-size:11.5px;color:#fff;letter-spacing:0"><span class="mn">-</span>12</div>
<div class="t " style="left:22px;top:388px;width:27px;height:16px;line-height:16px;text-align:right;font-size:11.5px;color:#fff;letter-spacing:0"><span class="mn">-</span>18</div>
<div class="t " style="left:22px;top:408px;width:27px;height:16px;line-height:16px;text-align:right;font-size:11.5px;color:#fff;letter-spacing:0"><span class="mn">-</span>24</div>
<div class="t " style="left:22px;top:428px;width:27px;height:16px;line-height:16px;text-align:right;font-size:11.5px;color:#fff;letter-spacing:0"><span class="mn">-</span>30</div>
<div class="t " style="left:22px;top:448px;width:27px;height:16px;line-height:16px;text-align:right;font-size:11.5px;color:#fff;letter-spacing:0"><span class="mn">-</span>36</div>
<div class="t " style="left:89px;top:472px;width:41px;height:14px;line-height:14px;text-align:center;font-size:12px;color:#fff;letter-spacing:0">10</div>
<div class="t " style="left:213px;top:472px;width:41px;height:14px;line-height:14px;text-align:center;font-size:12px;color:#fff;letter-spacing:0">50</div>
<div class="t " style="left:266px;top:472px;width:41px;height:14px;line-height:14px;text-align:center;font-size:12px;color:#fff;letter-spacing:0">100</div>
<div class="t " style="left:389px;top:472px;width:41px;height:14px;line-height:14px;text-align:center;font-size:12px;color:#fff;letter-spacing:0">500</div>
<div class="t " style="left:441px;top:472px;width:41px;height:14px;line-height:14px;text-align:center;font-size:12px;color:#fff;letter-spacing:0">1000</div>
<div class="t " style="left:54px;top:472px;width:40px;height:14px;line-height:14px;text-align:left;font-size:12px;color:#fff;letter-spacing:-0.2px">5 Hz</div>
<div class="t " style="left:478px;top:472px;width:40px;height:14px;line-height:14px;text-align:right;font-size:12px;color:#fff;letter-spacing:0">2000</div>
<div style="left:526px;top:252px;width:502px;height:238px;background:#000;"></div>
<div style="left:527px;top:253px;width:499px;height:235px;background:#c0c0c0;"></div>
<div style="left:529px;top:255px;width:497px;height:233px;background:#808080;"></div>
<div style="left:533px;top:260px;width:38px;height:16px;background:#000;"></div>
<div style="left:534px;top:261px;width:36px;height:14px;background:#716f64;"></div>
<div style="left:534px;top:261px;width:35px;height:13px;background:#fff;"></div>
<div style="left:535px;top:262px;width:34px;height:12px;background:#aca899;"></div>
<div style="left:535px;top:262px;width:33px;height:11px;background:#ece9d8;"></div>
<div class="t " style="left:534px;top:261px;width:36px;height:13px;line-height:13px;text-align:center;font-size:11px;color:#000;letter-spacing:-0.2px">Clear</div>
<div style="left:574px;top:260px;width:43px;height:16px;background:#716f64;"></div>
<div style="left:574px;top:260px;width:42px;height:15px;background:#fff;"></div>
<div style="left:575px;top:261px;width:41px;height:14px;background:#aca899;"></div>
<div style="left:575px;top:261px;width:40px;height:13px;background:#ece9d8;"></div>
<div class="t " style="left:574px;top:260px;width:43px;height:15px;line-height:15px;text-align:center;font-size:11px;color:#000;letter-spacing:0">Cursor</div>
<div class="t gt" style="left:688px;top:261px;height:18px;line-height:18px;letter-spacing:-0.187px">Phase Response (Degrees/Hz)</div>
<div style="left:559px;top:284px;width:462px;height:183px;background:#c0c0c0;"></div>
<div style="left:561px;top:286px;width:458px;height:179px;background:#000;"></div>
<svg style="left:561px;top:286px" width="458" height="179" viewBox="0 0 458 179" shape-rendering="crispEdges"><path d="M13.5,0V179M25.5,0V179M35.5,0V179M44.5,0V179M52.5,0V179M105.5,0V179M136.5,0V179M159.5,0V179M176.5,0V179M190.5,0V179M202.5,0V179M212.5,0V179M221.5,0V179M229.5,0V179M282.5,0V179M313.5,0V179M335.5,0V179M352.5,0V179M366.5,0V179M378.5,0V179M388.5,0V179M397.5,0V179M405.5,0V179M0,9.5H458M0,19.5H458M0,29.5H458M0,39.5H458M0,49.5H458M0,59.5H458M0,69.5H458M0,79.5H458M0,89.5H458M0,99.5H458M0,109.5H458M0,119.5H458M0,129.5H458M0,139.5H458M0,149.5H458M0,159.5H458M0,169.5H458" stroke="#808080" fill="none"/></svg>
<svg style="left:561px;top:286px" width="458" height="180" viewBox="0 0 458 180" shape-rendering="crispEdges"><path d="M-0.5,6.8L0.5,6.9L1.5,7.0L2.5,7.1L3.5,7.2L4.5,7.4L5.5,7.5L6.5,7.6L7.5,7.7L8.5,7.8L9.5,7.9L10.5,8.0L11.5,8.1L12.5,8.3L13.5,8.4L14.5,8.5L15.5,8.6L16.5,8.7L17.5,8.9L18.5,9.0L19.5,9.1L20.5,9.3L21.5,9.4L22.5,9.5L23.5,9.7L24.5,9.8L25.5,10.0L26.5,10.1L27.5,10.3L28.5,10.4L29.5,10.6L30.5,10.7L31.5,10.9L32.5,11.1L33.5,11.2L34.5,11.4L35.5,11.6L36.5,11.7L37.5,11.9L38.5,12.1L39.5,12.3L40.5,12.5L41.5,12.6L42.5,12.8L43.5,13.0L44.5,13.2L45.5,13.4L46.5,13.6L47.5,13.8L48.5,14.1L49.5,14.3L50.5,14.5L51.5,14.7L52.5,15.0L53.5,15.2L54.5,15.4L55.5,15.7L56.5,15.9L57.5,16.2L58.5,16.4L59.5,16.7L60.5,17.0L61.5,17.2L62.5,17.5L63.5,17.8L64.5,18.1L65.5,18.4L66.5,18.7L67.5,19.0L68.5,19.3L69.5,19.7L70.5,20.0L71.5,20.3L72.5,20.7L73.5,21.1L74.5,21.4L75.5,21.8L76.5,22.2L77.5,22.6L78.5,23.0L79.5,23.4L80.5,23.9L81.5,24.3L82.5,24.8L83.5,25.2L84.5,25.7L85.5,26.2L86.5,26.7L87.5,27.3L88.5,27.8L89.5,28.4L90.5,29.0L91.5,29.6L92.5,30.2L93.5,30.8L94.5,31.5L95.5,32.2L96.5,32.9L97.5,33.7L98.5,34.4L99.5,35.3L100.5,36.1L101.5,37.0L102.5,37.9L103.5,38.8L104.5,39.8L105.5,40.9L106.5,41.9L107.5,43.1L108.5,44.2L109.5,45.5L110.5,46.7L111.5,48.1L112.5,49.4L113.5,50.9L114.5,52.4L115.5,53.9L116.5,55.5L117.5,57.2L118.5,58.9L119.5,60.6L120.5,62.4L121.5,64.2L122.5,66.0L123.5,67.9L124.5,69.8L125.5,71.6L126.5,73.5L127.5,75.3L128.5,77.1L129.5,78.9L130.5,80.7L131.5,82.4L132.5,84.1L133.5,85.7L134.5,87.3L135.5,88.9L136.5,90.4L137.5,91.8L138.5,93.2L139.5,94.6L140.5,95.9L141.5,97.2L142.5,98.5L143.5,99.7L144.5,100.9L145.5,102.0L146.5,103.1L147.5,104.2L148.5,105.3L149.5,106.4L150.5,107.4L151.5,108.4L152.5,109.4L153.5,110.3L154.5,111.3L155.5,112.2L156.5,113.1L157.5,114.0L158.5,114.9L159.5,115.8L160.5,116.7L161.5,117.5L162.5,118.4L163.5,119.2L164.5,120.0L165.5,120.8L166.5,121.6L167.5,122.4L168.5,123.2L169.5,124.0L170.5,124.7L171.5,125.5L172.5,126.2L173.5,127.0L174.5,127.7L175.5,128.4L176.5,129.1L177.5,129.8L178.5,130.5L179.5,131.2L180.5,131.9L181.5,132.6L182.5,133.3L183.5,133.9L184.5,134.6L185.5,135.2L186.5,135.9L187.5,136.5L188.5,137.1L189.5,137.7L190.5,138.3L191.5,138.9L192.5,139.5L193.5,140.1L194.5,140.7L195.5,141.2L196.5,141.8L197.5,142.3L198.5,142.9L199.5,143.4L200.5,143.9L201.5,144.5L202.5,145.0L203.5,145.5L204.5,146.0L205.5,146.5L206.5,146.9L207.5,147.4L208.5,147.9L209.5,148.4L210.5,148.8L211.5,149.3L212.5,149.7L213.5,150.1L214.5,150.5L215.5,151.0L216.5,151.4L217.5,151.8L218.5,152.2L219.5,152.6L220.5,153.0L221.5,153.4L222.5,153.7L223.5,154.1L224.5,154.5L225.5,154.8L226.5,155.2L227.5,155.5L228.5,155.9L229.5,156.2L230.5,156.5L231.5,156.9L232.5,157.2L233.5,157.5L234.5,157.8L235.5,158.1L236.5,158.4L237.5,158.7L238.5,159.0L239.5,159.3L240.5,159.6L241.5,159.9L242.5,160.1L243.5,160.4L244.5,160.7L245.5,160.9L246.5,161.2L247.5,161.4L248.5,161.7L249.5,161.9L250.5,162.2L251.5,162.4L252.5,162.7L253.5,162.9L254.5,163.1L255.5,163.3L256.5,163.6L257.5,163.8L258.5,164.0L259.5,164.2L260.5,164.4L261.5,164.6L262.5,164.8L263.5,165.0L264.5,165.2L265.5,165.4L266.5,165.6L267.5,165.8L268.5,166.0L269.5,166.2L270.5,166.3L271.5,166.5L272.5,166.7L273.5,166.9L274.5,167.0L275.5,167.2L276.5,167.4L277.5,167.5L278.5,167.7L279.5,167.8L280.5,168.0L281.5,168.2L282.5,168.3L283.5,168.5L284.5,168.6L285.5,168.8L286.5,168.9L287.5,169.0L288.5,169.2L289.5,169.3L290.5,169.4L291.5,169.6L292.5,169.7L293.5,169.8L294.5,170.0L295.5,170.1L296.5,170.2L297.5,170.3L298.5,170.5L299.5,170.6L300.5,170.7L301.5,170.8L302.5,170.9L303.5,171.0L304.5,171.2L305.5,171.3L306.5,171.4L307.5,171.5L308.5,171.6L309.5,171.7L310.5,171.8L311.5,171.9L312.5,172.0L313.5,172.1L314.5,172.2L315.5,172.3L316.5,172.4L317.5,172.5L318.5,172.6L319.5,172.7L320.5,172.8L321.5,172.8L322.5,172.9L323.5,173.0L324.5,173.1L325.5,173.2L326.5,173.3L327.5,173.3L328.5,173.4L329.5,173.5L330.5,173.6L331.5,173.7L332.5,173.7L333.5,173.8L334.5,173.9L335.5,174.0L336.5,174.0L337.5,174.1L338.5,174.2L339.5,174.2L340.5,174.3L341.5,174.4L342.5,174.4L343.5,174.5L344.5,174.6L345.5,174.6L346.5,174.7L347.5,174.8L348.5,174.8L349.5,174.9L350.5,175.0L351.5,175.0L352.5,175.1L353.5,175.1L354.5,175.2L355.5,175.2L356.5,175.3L357.5,175.3L358.5,175.4L359.5,175.5L360.5,175.5L361.5,175.6L362.5,175.6L363.5,175.7L364.5,175.7L365.5,175.8L366.5,175.8L367.5,175.9L368.5,175.9L369.5,176.0L370.5,176.0L371.5,176.0L372.5,176.1L373.5,176.1L374.5,176.2L375.5,176.2L376.5,176.3L377.5,176.3L378.5,176.3L379.5,176.4L380.5,176.4L381.5,176.5L382.5,176.5L383.5,176.5L384.5,176.6L385.5,176.6L386.5,176.7L387.5,176.7L388.5,176.7L389.5,176.8L390.5,176.8L391.5,176.8L392.5,176.9L393.5,176.9L394.5,176.9L395.5,177.0L396.5,177.0L397.5,177.0L398.5,177.1L399.5,177.1L400.5,177.1L401.5,177.2L402.5,177.2L403.5,177.2L404.5,177.3L405.5,177.3L406.5,177.3L407.5,177.3L408.5,177.4L409.5,177.4L410.5,177.4L411.5,177.5L412.5,177.5L413.5,177.5L414.5,177.5L415.5,177.6L416.5,177.6L417.5,177.6L418.5,177.6L419.5,177.7L420.5,177.7L421.5,177.7L422.5,177.7L423.5,177.7L424.5,177.8L425.5,177.8L426.5,177.8L427.5,177.8L428.5,177.9L429.5,177.9L430.5,177.9L431.5,177.9L432.5,177.9L433.5,178.0L434.5,178.0L435.5,178.0L436.5,178.0L437.5,178.0L438.5,178.1L439.5,178.1L440.5,178.1L441.5,178.1L442.5,178.1L443.5,178.2L444.5,178.2L445.5,178.2L446.5,178.2L447.5,178.2L448.5,178.2L449.5,178.3L450.5,178.3L451.5,178.3L452.5,178.3L453.5,178.3L454.5,178.3L455.5,178.3L456.5,178.4L457.5,178.4L458.5,178.4L459.5,178.4" stroke="#ff0000" fill="none" stroke-width="1" shape-rendering="crispEdges"/><path d="M-0.5,93.2L0.5,93.2L1.5,93.3L2.5,93.3L3.5,93.4L4.5,93.4L5.5,93.5L6.5,93.5L7.5,93.6L8.5,93.6L9.5,93.7L10.5,93.7L11.5,93.8L12.5,93.9L13.5,93.9L14.5,94.0L15.5,94.0L16.5,94.1L17.5,94.2L18.5,94.2L19.5,94.3L20.5,94.3L21.5,94.4L22.5,94.5L23.5,94.5L24.5,94.6L25.5,94.7L26.5,94.7L27.5,94.8L28.5,94.9L29.5,95.0L30.5,95.0L31.5,95.1L32.5,95.2L33.5,95.2L34.5,95.3L35.5,95.4L36.5,95.5L37.5,95.6L38.5,95.6L39.5,95.7L40.5,95.8L41.5,95.9L42.5,96.0L43.5,96.1L44.5,96.1L45.5,96.2L46.5,96.3L47.5,96.4L48.5,96.5L49.5,96.6L50.5,96.7L51.5,96.8L52.5,96.9L53.5,97.0L54.5,97.1L55.5,97.2L56.5,97.3L57.5,97.4L58.5,97.5L59.5,97.6L60.5,97.7L61.5,97.8L62.5,97.9L63.5,98.1L64.5,98.2L65.5,98.3L66.5,98.4L67.5,98.5L68.5,98.7L69.5,98.8L70.5,98.9L71.5,99.0L72.5,99.2L73.5,99.3L74.5,99.4L75.5,99.6L76.5,99.7L77.5,99.8L78.5,100.0L79.5,100.1L80.5,100.3L81.5,100.4L82.5,100.5L83.5,100.7L84.5,100.9L85.5,101.0L86.5,101.2L87.5,101.3L88.5,101.5L89.5,101.7L90.5,101.8L91.5,102.0L92.5,102.2L93.5,102.3L94.5,102.5L95.5,102.7L96.5,102.9L97.5,103.1L98.5,103.2L99.5,103.4L100.5,103.6L101.5,103.8L102.5,104.0L103.5,104.2L104.5,104.4L105.5,104.6L106.5,104.9L107.5,105.1L108.5,105.3L109.5,105.5L110.5,105.7L111.5,106.0L112.5,106.2L113.5,106.4L114.5,106.7L115.5,106.9L116.5,107.2L117.5,107.4L118.5,107.7L119.5,107.9L120.5,108.2L121.5,108.4L122.5,108.7L123.5,109.0L124.5,109.3L125.5,109.6L126.5,109.8L127.5,110.1L128.5,110.4L129.5,110.7L130.5,111.0L131.5,111.3L132.5,111.7L133.5,112.0L134.5,112.3L135.5,112.6L136.5,113.0L137.5,113.3L138.5,113.6L139.5,114.0L140.5,114.3L141.5,114.7L142.5,115.1L143.5,115.4L144.5,115.8L145.5,116.2L146.5,116.6L147.5,116.9L148.5,117.3L149.5,117.7L150.5,118.1L151.5,118.6L152.5,119.0L153.5,119.4L154.5,119.8L155.5,120.2L156.5,120.7L157.5,121.1L158.5,121.6L159.5,122.0L160.5,122.5L161.5,122.9L162.5,123.4L163.5,123.9L164.5,124.3L165.5,124.8L166.5,125.3L167.5,125.8L168.5,126.3L169.5,126.8L170.5,127.3L171.5,127.8L172.5,128.3L173.5,128.8L174.5,129.3L175.5,129.8L176.5,130.3L177.5,130.8L178.5,131.3L179.5,131.9L180.5,132.4L181.5,132.9L182.5,133.4L183.5,133.9L184.5,134.5L185.5,135.0L186.5,135.5L187.5,136.0L188.5,136.6L189.5,137.1L190.5,137.6L191.5,138.1L192.5,138.6L193.5,139.1L194.5,139.7L195.5,140.2L196.5,140.7L197.5,141.2L198.5,141.7L199.5,142.2L200.5,142.7L201.5,143.2L202.5,143.6L203.5,144.1L204.5,144.6L205.5,145.1L206.5,145.5L207.5,146.0L208.5,146.5L209.5,146.9L210.5,147.4L211.5,147.8L212.5,148.3L213.5,148.7L214.5,149.1L215.5,149.6L216.5,150.0L217.5,150.4L218.5,150.8L219.5,151.2L220.5,151.6L221.5,152.0L222.5,152.4L223.5,152.8L224.5,153.2L225.5,153.5L226.5,153.9L227.5,154.3L228.5,154.6L229.5,155.0L230.5,155.3L231.5,155.7L232.5,156.0L233.5,156.3L234.5,156.7L235.5,157.0L236.5,157.3L237.5,157.6L238.5,157.9L239.5,158.2L240.5,158.5L241.5,158.8L242.5,159.1L243.5,159.4L244.5,159.7L245.5,160.0L246.5,160.3L247.5,160.5L248.5,160.8L249.5,161.0L250.5,161.3L251.5,161.6L252.5,161.8L253.5,162.1L254.5,162.3L255.5,162.5L256.5,162.8L257.5,163.0L258.5,163.2L259.5,163.5L260.5,163.7L261.5,163.9L262.5,164.1L263.5,164.3L264.5,164.5L265.5,164.7L266.5,164.9L267.5,165.1L268.5,165.3L269.5,165.5L270.5,165.7L271.5,165.9L272.5,166.1L273.5,166.3L274.5,166.5L275.5,166.6L276.5,166.8L277.5,167.0L278.5,167.2L279.5,167.3L280.5,167.5L281.5,167.7L282.5,167.8L283.5,168.0L284.5,168.1L285.5,168.3L286.5,168.4L287.5,168.6L288.5,168.7L289.5,168.9L290.5,169.0L291.5,169.2L292.5,169.3L293.5,169.4L294.5,169.6L295.5,169.7L296.5,169.8L297.5,170.0L298.5,170.1L299.5,170.2L300.5,170.3L301.5,170.5L302.5,170.6L303.5,170.7L304.5,170.8L305.5,170.9L306.5,171.0L307.5,171.2L308.5,171.3L309.5,171.4L310.5,171.5L311.5,171.6L312.5,171.7L313.5,171.8L314.5,171.9L315.5,172.0L316.5,172.1L317.5,172.2L318.5,172.3L319.5,172.4L320.5,172.5L321.5,172.6L322.5,172.7L323.5,172.8L324.5,172.8L325.5,172.9L326.5,173.0L327.5,173.1L328.5,173.2L329.5,173.3L330.5,173.4L331.5,173.4L332.5,173.5L333.5,173.6L334.5,173.7L335.5,173.7L336.5,173.8L337.5,173.9L338.5,174.0L339.5,174.0L340.5,174.1L341.5,174.2L342.5,174.3L343.5,174.3L344.5,174.4L345.5,174.5L346.5,174.5L347.5,174.6L348.5,174.6L349.5,174.7L350.5,174.8L351.5,174.8L352.5,174.9L353.5,175.0L354.5,175.0L355.5,175.1L356.5,175.1L357.5,175.2L358.5,175.2L359.5,175.3L360.5,175.4L361.5,175.4L362.5,175.5L363.5,175.5L364.5,175.6L365.5,175.6L366.5,175.7L367.5,175.7L368.5,175.8L369.5,175.8L370.5,175.9L371.5,175.9L372.5,176.0L373.5,176.0L374.5,176.1L375.5,176.1L376.5,176.1L377.5,176.2L378.5,176.2L379.5,176.3L380.5,176.3L381.5,176.4L382.5,176.4L383.5,176.4L384.5,176.5L385.5,176.5L386.5,176.6L387.5,176.6L388.5,176.6L389.5,176.7L390.5,176.7L391.5,176.7L392.5,176.8L393.5,176.8L394.5,176.8L395.5,176.9L396.5,176.9L397.5,176.9L398.5,177.0L399.5,177.0L400.5,177.0L401.5,177.1L402.5,177.1L403.5,177.1L404.5,177.2L405.5,177.2L406.5,177.2L407.5,177.3L408.5,177.3L409.5,177.3L410.5,177.3L411.5,177.4L412.5,177.4L413.5,177.4L414.5,177.5L415.5,177.5L416.5,177.5L417.5,177.5L418.5,177.6L419.5,177.6L420.5,177.6L421.5,177.6L422.5,177.7L423.5,177.7L424.5,177.7L425.5,177.7L426.5,177.8L427.5,177.8L428.5,177.8L429.5,177.8L430.5,177.8L431.5,177.9L432.5,177.9L433.5,177.9L434.5,177.9L435.5,177.9L436.5,178.0L437.5,178.0L438.5,178.0L439.5,178.0L440.5,178.0L441.5,178.1L442.5,178.1L443.5,178.1L444.5,178.1L445.5,178.1L446.5,178.2L447.5,178.2L448.5,178.2L449.5,178.2L450.5,178.2L451.5,178.2L452.5,178.3L453.5,178.3L454.5,178.3L455.5,178.3L456.5,178.3L457.5,178.3L458.5,178.3L459.5,178.4" stroke="#ff00ff" fill="none" stroke-width="1" shape-rendering="crispEdges"/></svg>
<div style="left:574px;top:284px;width:1px;height:2px;background:#808080;"></div>
<div style="left:586px;top:284px;width:1px;height:2px;background:#808080;"></div>
<div style="left:596px;top:284px;width:1px;height:2px;background:#808080;"></div>
<div style="left:605px;top:284px;width:1px;height:2px;background:#808080;"></div>
<div style="left:613px;top:284px;width:1px;height:2px;background:#808080;"></div>
<div style="left:666px;top:284px;width:1px;height:2px;background:#808080;"></div>
<div style="left:697px;top:284px;width:1px;height:2px;background:#808080;"></div>
<div style="left:720px;top:284px;width:1px;height:2px;background:#808080;"></div>
<div style="left:737px;top:284px;width:1px;height:2px;background:#808080;"></div>
<div style="left:751px;top:284px;width:1px;height:2px;background:#808080;"></div>
<div style="left:763px;top:284px;width:1px;height:2px;background:#808080;"></div>
<div style="left:773px;top:284px;width:1px;height:2px;background:#808080;"></div>
<div style="left:782px;top:284px;width:1px;height:2px;background:#808080;"></div>
<div style="left:790px;top:284px;width:1px;height:2px;background:#808080;"></div>
<div style="left:843px;top:284px;width:1px;height:2px;background:#808080;"></div>
<div style="left:874px;top:284px;width:1px;height:2px;background:#808080;"></div>
<div style="left:896px;top:284px;width:1px;height:2px;background:#808080;"></div>
<div style="left:913px;top:284px;width:1px;height:2px;background:#808080;"></div>
<div style="left:927px;top:284px;width:1px;height:2px;background:#808080;"></div>
<div style="left:939px;top:284px;width:1px;height:2px;background:#808080;"></div>
<div style="left:949px;top:284px;width:1px;height:2px;background:#808080;"></div>
<div style="left:958px;top:284px;width:1px;height:2px;background:#808080;"></div>
<div style="left:966px;top:284px;width:1px;height:2px;background:#808080;"></div>
<div style="left:560px;top:467px;width:1px;height:3px;background:#fff;"></div>
<div style="left:574px;top:467px;width:1px;height:3px;background:#fff;"></div>
<div style="left:586px;top:467px;width:1px;height:3px;background:#fff;"></div>
<div style="left:596px;top:467px;width:1px;height:3px;background:#fff;"></div>
<div style="left:605px;top:467px;width:1px;height:3px;background:#fff;"></div>
<div style="left:613px;top:467px;width:1px;height:3px;background:#fff;"></div>
<div style="left:666px;top:467px;width:1px;height:3px;background:#fff;"></div>
<div style="left:697px;top:467px;width:1px;height:3px;background:#fff;"></div>
<div style="left:720px;top:467px;width:1px;height:3px;background:#fff;"></div>
<div style="left:737px;top:467px;width:1px;height:3px;background:#fff;"></div>
<div style="left:751px;top:467px;width:1px;height:3px;background:#fff;"></div>
<div style="left:763px;top:467px;width:1px;height:3px;background:#fff;"></div>
<div style="left:773px;top:467px;width:1px;height:3px;background:#fff;"></div>
<div style="left:782px;top:467px;width:1px;height:3px;background:#fff;"></div>
<div style="left:790px;top:467px;width:1px;height:3px;background:#fff;"></div>
<div style="left:843px;top:467px;width:1px;height:3px;background:#fff;"></div>
<div style="left:874px;top:467px;width:1px;height:3px;background:#fff;"></div>
<div style="left:896px;top:467px;width:1px;height:3px;background:#fff;"></div>
<div style="left:913px;top:467px;width:1px;height:3px;background:#fff;"></div>
<div style="left:927px;top:467px;width:1px;height:3px;background:#fff;"></div>
<div style="left:939px;top:467px;width:1px;height:3px;background:#fff;"></div>
<div style="left:949px;top:467px;width:1px;height:3px;background:#fff;"></div>
<div style="left:958px;top:467px;width:1px;height:3px;background:#fff;"></div>
<div style="left:966px;top:467px;width:1px;height:3px;background:#fff;"></div>
<div style="left:1019px;top:467px;width:1px;height:3px;background:#fff;"></div>
<div style="left:556px;top:285px;width:3px;height:1px;background:#fff;"></div>
<div style="left:1021px;top:285px;width:3px;height:1px;background:#fff;"></div>
<div style="left:556px;top:305px;width:3px;height:1px;background:#fff;"></div>
<div style="left:1021px;top:305px;width:3px;height:1px;background:#fff;"></div>
<div style="left:556px;top:325px;width:3px;height:1px;background:#fff;"></div>
<div style="left:1021px;top:325px;width:3px;height:1px;background:#fff;"></div>
<div style="left:556px;top:345px;width:3px;height:1px;background:#fff;"></div>
<div style="left:1021px;top:345px;width:3px;height:1px;background:#fff;"></div>
<div style="left:556px;top:365px;width:3px;height:1px;background:#fff;"></div>
<div style="left:1021px;top:365px;width:3px;height:1px;background:#fff;"></div>
<div style="left:556px;top:385px;width:3px;height:1px;background:#fff;"></div>
<div style="left:1021px;top:385px;width:3px;height:1px;background:#fff;"></div>
<div style="left:556px;top:405px;width:3px;height:1px;background:#fff;"></div>
<div style="left:1021px;top:405px;width:3px;height:1px;background:#fff;"></div>
<div style="left:556px;top:425px;width:3px;height:1px;background:#fff;"></div>
<div style="left:1021px;top:425px;width:3px;height:1px;background:#fff;"></div>
<div style="left:556px;top:445px;width:3px;height:1px;background:#fff;"></div>
<div style="left:1021px;top:445px;width:3px;height:1px;background:#fff;"></div>
<div style="left:556px;top:465px;width:3px;height:1px;background:#fff;"></div>
<div style="left:1021px;top:465px;width:3px;height:1px;background:#fff;"></div>
<div class="t " style="left:526px;top:278px;width:31px;height:16px;line-height:16px;text-align:right;font-size:11.5px;color:#fff;letter-spacing:0">360&deg;</div>
<div class="t " style="left:526px;top:298px;width:31px;height:16px;line-height:16px;text-align:right;font-size:11.5px;color:#fff;letter-spacing:0">320&deg;</div>
<div class="t " style="left:526px;top:318px;width:31px;height:16px;line-height:16px;text-align:right;font-size:11.5px;color:#fff;letter-spacing:0">280&deg;</div>
<div class="t " style="left:526px;top:338px;width:31px;height:16px;line-height:16px;text-align:right;font-size:11.5px;color:#fff;letter-spacing:0">240&deg;</div>
<div class="t " style="left:526px;top:358px;width:31px;height:16px;line-height:16px;text-align:right;font-size:11.5px;color:#fff;letter-spacing:0">200&deg;</div>
<div class="t " style="left:526px;top:378px;width:31px;height:16px;line-height:16px;text-align:right;font-size:11.5px;color:#fff;letter-spacing:0">160&deg;</div>
<div class="t " style="left:526px;top:398px;width:31px;height:16px;line-height:16px;text-align:right;font-size:11.5px;color:#fff;letter-spacing:0">120&deg;</div>
<div class="t " style="left:526px;top:418px;width:31px;height:16px;line-height:16px;text-align:right;font-size:11.5px;color:#fff;letter-spacing:0">80&deg;</div>
<div class="t " style="left:526px;top:438px;width:31px;height:16px;line-height:16px;text-align:right;font-size:11.5px;color:#fff;letter-spacing:0">40&deg;</div>
<div class="t " style="left:526px;top:458px;width:31px;height:16px;line-height:16px;text-align:right;font-size:11.5px;color:#fff;letter-spacing:0">0&deg;</div>
<div class="t " style="left:593px;top:472px;width:41px;height:14px;line-height:14px;text-align:center;font-size:12px;color:#fff;letter-spacing:0">10</div>
<div class="t " style="left:717px;top:472px;width:41px;height:14px;line-height:14px;text-align:center;font-size:12px;color:#fff;letter-spacing:0">50</div>
<div class="t " style="left:770px;top:472px;width:41px;height:14px;line-height:14px;text-align:center;font-size:12px;color:#fff;letter-spacing:0">100</div>
<div class="t " style="left:893px;top:472px;width:41px;height:14px;line-height:14px;text-align:center;font-size:12px;color:#fff;letter-spacing:0">500</div>
<div class="t " style="left:945px;top:472px;width:41px;height:14px;line-height:14px;text-align:center;font-size:12px;color:#fff;letter-spacing:0">1000</div>
<div class="t " style="left:558px;top:472px;width:40px;height:14px;line-height:14px;text-align:left;font-size:12px;color:#fff;letter-spacing:-0.2px">5 Hz</div>
<div class="t " style="left:982px;top:472px;width:40px;height:14px;line-height:14px;text-align:right;font-size:12px;color:#fff;letter-spacing:0">2000</div>
<div style="left:22px;top:490px;width:502px;height:238px;background:#000;"></div>
<div style="left:23px;top:491px;width:499px;height:235px;background:#c0c0c0;"></div>
<div style="left:25px;top:493px;width:497px;height:233px;background:#808080;"></div>
<div style="left:29px;top:498px;width:38px;height:16px;background:#716f64;"></div>
<div style="left:29px;top:498px;width:37px;height:15px;background:#fff;"></div>
<div style="left:30px;top:499px;width:36px;height:14px;background:#aca899;"></div>
<div style="left:30px;top:499px;width:35px;height:13px;background:#ece9d8;"></div>
<div class="t " style="left:29px;top:498px;width:38px;height:15px;line-height:15px;text-align:center;font-size:11px;color:#000;letter-spacing:-0.2px">Clear</div>
<div style="left:70px;top:498px;width:43px;height:16px;background:#716f64;"></div>
<div style="left:70px;top:498px;width:42px;height:15px;background:#fff;"></div>
<div style="left:71px;top:499px;width:41px;height:14px;background:#aca899;"></div>
<div style="left:71px;top:499px;width:40px;height:13px;background:#ece9d8;"></div>
<div class="t " style="left:70px;top:498px;width:43px;height:15px;line-height:15px;text-align:center;font-size:11px;color:#000;letter-spacing:0">Cursor</div>
<div class="t gt" style="left:138px;top:499px;height:18px;line-height:18px;letter-spacing:-0.303px">Amplitude Response w/ 2.83V Input (dBSPL/Hz)</div>
<div style="left:487px;top:503px;width:7px;height:1px;background:#fff;"></div>
<div style="left:486px;top:504px;width:1px;height:1px;background:#fff;"></div>
<div style="left:485px;top:505px;width:1px;height:1px;background:#fff;"></div>
<div style="left:494px;top:504px;width:1px;height:1px;background:#000;"></div>
<div style="left:495px;top:505px;width:1px;height:1px;background:#000;"></div>
<div style="left:487px;top:504px;width:7px;height:2px;background:#a4a4a4;"></div>
<div style="left:486px;top:505px;width:1px;height:1px;background:#a4a4a4;"></div>
<div style="left:493px;top:504px;width:1px;height:2px;background:#e8e8e8;"></div>
<div style="left:479px;top:506px;width:20px;height:5px;background:#dcdcdc;"></div>
<div style="left:479px;top:506px;width:6px;height:1px;background:#fff;"></div>
<div style="left:496px;top:506px;width:3px;height:1px;background:#fff;"></div>
<div style="left:479px;top:506px;width:1px;height:5px;background:#fff;"></div>
<div style="left:486px;top:506px;width:7px;height:3px;background:#a8a8a8;"></div>
<div style="left:488px;top:506px;width:3px;height:2px;background:#c8c8c8;"></div>
<div style="left:479px;top:510px;width:20px;height:1px;background:#fff;"></div>
<div style="left:479px;top:511px;width:21px;height:1px;background:#000;"></div>
<div style="left:499px;top:507px;width:1px;height:5px;background:#000;"></div>
<div style="left:482px;top:510px;width:3px;height:3px;background:#000;"></div>
<div style="left:494px;top:510px;width:3px;height:3px;background:#000;"></div>
<div style="left:503px;top:501px;width:13px;height:13px;background:#fff;"></div>
<div style="left:503px;top:501px;width:12px;height:12px;background:#aca899;"></div>
<div style="left:504px;top:502px;width:11px;height:11px;background:#ece9d8;"></div>
<div style="left:504px;top:502px;width:10px;height:10px;background:#716f64;"></div>
<div style="left:505px;top:503px;width:9px;height:9px;background:#fff;"></div>
<div style="left:55px;top:522px;width:462px;height:183px;background:#c0c0c0;"></div>
<div style="left:57px;top:524px;width:458px;height:179px;background:#000;"></div>
<svg style="left:57px;top:524px" width="458" height="179" viewBox="0 0 458 179" shape-rendering="crispEdges"><path d="M13.5,0V179M25.5,0V179M35.5,0V179M44.5,0V179M52.5,0V179M105.5,0V179M136.5,0V179M159.5,0V179M176.5,0V179M190.5,0V179M202.5,0V179M212.5,0V179M221.5,0V179M229.5,0V179M282.5,0V179M313.5,0V179M335.5,0V179M352.5,0V179M366.5,0V179M378.5,0V179M388.5,0V179M397.5,0V179M405.5,0V179M0,9.5H458M0,19.5H458M0,29.5H458M0,39.5H458M0,49.5H458M0,59.5H458M0,69.5H458M0,79.5H458M0,89.5H458M0,99.5H458M0,109.5H458M0,119.5H458M0,129.5H458M0,139.5H458M0,149.5H458M0,159.5H458M0,169.5H458" stroke="#808080" fill="none"/></svg>
<div style="left:70px;top:522px;width:1px;height:2px;background:#808080;"></div>
<div style="left:82px;top:522px;width:1px;height:2px;background:#808080;"></div>
<div style="left:92px;top:522px;width:1px;height:2px;background:#808080;"></div>
<div style="left:101px;top:522px;width:1px;height:2px;background:#808080;"></div>
<div style="left:109px;top:522px;width:1px;height:2px;background:#808080;"></div>
<div style="left:162px;top:522px;width:1px;height:2px;background:#808080;"></div>
<div style="left:193px;top:522px;width:1px;height:2px;background:#808080;"></div>
<div style="left:216px;top:522px;width:1px;height:2px;background:#808080;"></div>
<div style="left:233px;top:522px;width:1px;height:2px;background:#808080;"></div>
<div style="left:247px;top:522px;width:1px;height:2px;background:#808080;"></div>
<div style="left:259px;top:522px;width:1px;height:2px;background:#808080;"></div>
<div style="left:269px;top:522px;width:1px;height:2px;background:#808080;"></div>
<div style="left:278px;top:522px;width:1px;height:2px;background:#808080;"></div>
<div style="left:286px;top:522px;width:1px;height:2px;background:#808080;"></div>
<div style="left:339px;top:522px;width:1px;height:2px;background:#808080;"></div>
<div style="left:370px;top:522px;width:1px;height:2px;background:#808080;"></div>
<div style="left:392px;top:522px;width:1px;height:2px;background:#808080;"></div>
<div style="left:409px;top:522px;width:1px;height:2px;background:#808080;"></div>
<div style="left:423px;top:522px;width:1px;height:2px;background:#808080;"></div>
<div style="left:435px;top:522px;width:1px;height:2px;background:#808080;"></div>
<div style="left:445px;top:522px;width:1px;height:2px;background:#808080;"></div>
<div style="left:454px;top:522px;width:1px;height:2px;background:#808080;"></div>
<div style="left:462px;top:522px;width:1px;height:2px;background:#808080;"></div>
<div style="left:56px;top:705px;width:1px;height:3px;background:#fff;"></div>
<div style="left:70px;top:705px;width:1px;height:3px;background:#fff;"></div>
<div style="left:82px;top:705px;width:1px;height:3px;background:#fff;"></div>
<div style="left:92px;top:705px;width:1px;height:3px;background:#fff;"></div>
<div style="left:101px;top:705px;width:1px;height:3px;background:#fff;"></div>
<div style="left:109px;top:705px;width:1px;height:3px;background:#fff;"></div>
<div style="left:162px;top:705px;width:1px;height:3px;background:#fff;"></div>
<div style="left:193px;top:705px;width:1px;height:3px;background:#fff;"></div>
<div style="left:216px;top:705px;width:1px;height:3px;background:#fff;"></div>
<div style="left:233px;top:705px;width:1px;height:3px;background:#fff;"></div>
<div style="left:247px;top:705px;width:1px;height:3px;background:#fff;"></div>
<div style="left:259px;top:705px;width:1px;height:3px;background:#fff;"></div>
<div style="left:269px;top:705px;width:1px;height:3px;background:#fff;"></div>
<div style="left:278px;top:705px;width:1px;height:3px;background:#fff;"></div>
<div style="left:286px;top:705px;width:1px;height:3px;background:#fff;"></div>
<div style="left:339px;top:705px;width:1px;height:3px;background:#fff;"></div>
<div style="left:370px;top:705px;width:1px;height:3px;background:#fff;"></div>
<div style="left:392px;top:705px;width:1px;height:3px;background:#fff;"></div>
<div style="left:409px;top:705px;width:1px;height:3px;background:#fff;"></div>
<div style="left:423px;top:705px;width:1px;height:3px;background:#fff;"></div>
<div style="left:435px;top:705px;width:1px;height:3px;background:#fff;"></div>
<div style="left:445px;top:705px;width:1px;height:3px;background:#fff;"></div>
<div style="left:454px;top:705px;width:1px;height:3px;background:#fff;"></div>
<div style="left:462px;top:705px;width:1px;height:3px;background:#fff;"></div>
<div style="left:515px;top:705px;width:1px;height:3px;background:#fff;"></div>
<div style="left:52px;top:533px;width:3px;height:1px;background:#fff;"></div>
<div style="left:517px;top:533px;width:3px;height:1px;background:#fff;"></div>
<div style="left:52px;top:553px;width:3px;height:1px;background:#fff;"></div>
<div style="left:517px;top:553px;width:3px;height:1px;background:#fff;"></div>
<div style="left:52px;top:573px;width:3px;height:1px;background:#fff;"></div>
<div style="left:517px;top:573px;width:3px;height:1px;background:#fff;"></div>
<div style="left:52px;top:593px;width:3px;height:1px;background:#fff;"></div>
<div style="left:517px;top:593px;width:3px;height:1px;background:#fff;"></div>
<div style="left:52px;top:613px;width:3px;height:1px;background:#fff;"></div>
<div style="left:517px;top:613px;width:3px;height:1px;background:#fff;"></div>
<div style="left:52px;top:633px;width:3px;height:1px;background:#fff;"></div>
<div style="left:517px;top:633px;width:3px;height:1px;background:#fff;"></div>
<div style="left:52px;top:653px;width:3px;height:1px;background:#fff;"></div>
<div style="left:517px;top:653px;width:3px;height:1px;background:#fff;"></div>
<div style="left:52px;top:673px;width:3px;height:1px;background:#fff;"></div>
<div style="left:517px;top:673px;width:3px;height:1px;background:#fff;"></div>
<div style="left:52px;top:693px;width:3px;height:1px;background:#fff;"></div>
<div style="left:517px;top:693px;width:3px;height:1px;background:#fff;"></div>
<div class="t " style="left:22px;top:526px;width:27px;height:16px;line-height:16px;text-align:right;font-size:11.5px;color:#fff;letter-spacing:0">dB</div>
<div class="t " style="left:89px;top:710px;width:41px;height:14px;line-height:14px;text-align:center;font-size:12px;color:#fff;letter-spacing:0">10</div>
<div class="t " style="left:213px;top:710px;width:41px;height:14px;line-height:14px;text-align:center;font-size:12px;color:#fff;letter-spacing:0">50</div>
<div class="t " style="left:266px;top:710px;width:41px;height:14px;line-height:14px;text-align:center;font-size:12px;color:#fff;letter-spacing:0">100</div>
<div class="t " style="left:389px;top:710px;width:41px;height:14px;line-height:14px;text-align:center;font-size:12px;color:#fff;letter-spacing:0">500</div>
<div class="t " style="left:441px;top:710px;width:41px;height:14px;line-height:14px;text-align:center;font-size:12px;color:#fff;letter-spacing:0">1000</div>
<div class="t " style="left:54px;top:710px;width:40px;height:14px;line-height:14px;text-align:left;font-size:12px;color:#fff;letter-spacing:-0.2px">5 Hz</div>
<div class="t " style="left:478px;top:710px;width:40px;height:14px;line-height:14px;text-align:right;font-size:12px;color:#fff;letter-spacing:0">2000</div>
<div style="left:526px;top:490px;width:502px;height:238px;background:#000;"></div>
<div style="left:527px;top:491px;width:499px;height:235px;background:#c0c0c0;"></div>
<div style="left:529px;top:493px;width:497px;height:233px;background:#808080;"></div>
<div style="left:533px;top:498px;width:38px;height:16px;background:#000;"></div>
<div style="left:534px;top:499px;width:36px;height:14px;background:#716f64;"></div>
<div style="left:534px;top:499px;width:35px;height:13px;background:#fff;"></div>
<div style="left:535px;top:500px;width:34px;height:12px;background:#aca899;"></div>
<div style="left:535px;top:500px;width:33px;height:11px;background:#ece9d8;"></div>
<div class="t " style="left:534px;top:499px;width:36px;height:13px;line-height:13px;text-align:center;font-size:11px;color:#000;letter-spacing:-0.2px">Clear</div>
<div style="left:574px;top:498px;width:43px;height:16px;background:#716f64;"></div>
<div style="left:574px;top:498px;width:42px;height:15px;background:#fff;"></div>
<div style="left:575px;top:499px;width:41px;height:14px;background:#aca899;"></div>
<div style="left:575px;top:499px;width:40px;height:13px;background:#ece9d8;"></div>
<div class="t " style="left:574px;top:498px;width:43px;height:15px;line-height:15px;text-align:center;font-size:11px;color:#000;letter-spacing:0">Cursor</div>
<div class="t gt" style="left:691.5px;top:499px;height:18px;line-height:18px;letter-spacing:-0.352px">Group Delay (Milliseconds/Hz)</div>
<div style="left:559px;top:522px;width:462px;height:183px;background:#c0c0c0;"></div>
<div style="left:561px;top:524px;width:458px;height:179px;background:#000;"></div>
<svg style="left:561px;top:524px" width="458" height="179" viewBox="0 0 458 179" shape-rendering="crispEdges"><path d="M13.5,0V179M25.5,0V179M35.5,0V179M44.5,0V179M52.5,0V179M105.5,0V179M136.5,0V179M159.5,0V179M176.5,0V179M190.5,0V179M202.5,0V179M212.5,0V179M221.5,0V179M229.5,0V179M282.5,0V179M313.5,0V179M335.5,0V179M352.5,0V179M366.5,0V179M378.5,0V179M388.5,0V179M397.5,0V179M405.5,0V179M0,9.5H458M0,19.5H458M0,29.5H458M0,39.5H458M0,49.5H458M0,59.5H458M0,69.5H458M0,79.5H458M0,89.5H458M0,99.5H458M0,109.5H458M0,119.5H458M0,129.5H458M0,139.5H458M0,149.5H458M0,159.5H458M0,169.5H458" stroke="#808080" fill="none"/></svg>
<svg style="left:561px;top:524px" width="458" height="180" viewBox="0 0 458 180" shape-rendering="crispEdges"><path d="M-0.5,95.1L0.5,95.1L1.5,94.9L2.5,94.8L3.5,94.7L4.5,94.6L5.5,94.4L6.5,94.3L7.5,94.2L8.5,94.0L9.5,93.9L10.5,93.7L11.5,93.6L12.5,93.4L13.5,93.2L14.5,93.1L15.5,92.9L16.5,92.7L17.5,92.5L18.5,92.3L19.5,92.1L20.5,91.9L21.5,91.7L22.5,91.5L23.5,91.3L24.5,91.0L25.5,90.8L26.5,90.6L27.5,90.3L28.5,90.0L29.5,89.8L30.5,89.5L31.5,89.2L32.5,88.9L33.5,88.6L34.5,88.3L35.5,88.0L36.5,87.6L37.5,87.3L38.5,86.9L39.5,86.5L40.5,86.1L41.5,85.8L42.5,85.3L43.5,84.9L44.5,84.5L45.5,84.0L46.5,83.5L47.5,83.1L48.5,82.5L49.5,82.0L50.5,81.5L51.5,80.9L52.5,80.3L53.5,79.7L54.5,79.1L55.5,78.4L56.5,77.8L57.5,77.1L58.5,76.3L59.5,75.6L60.5,74.8L61.5,74.0L62.5,73.1L63.5,72.2L64.5,71.3L65.5,70.3L66.5,69.3L67.5,68.3L68.5,67.2L69.5,66.1L70.5,64.9L71.5,63.6L72.5,62.3L73.5,61.0L74.5,59.6L75.5,58.1L76.5,56.6L77.5,54.9L78.5,53.2L79.5,51.5L80.5,49.6L81.5,47.6L82.5,45.6L83.5,43.4L84.5,41.2L85.5,38.8L86.5,36.3L87.5,33.6L88.5,30.9L89.5,27.9L90.5,24.9L91.5,21.6L92.5,18.2L93.5,14.6L94.5,10.8L95.5,6.8L96.5,2.6L97.5,-1.9M140.5,1.7L141.5,9.1L142.5,16.1L143.5,22.7L144.5,28.9L145.5,34.7L146.5,40.1L147.5,45.2L148.5,50.0L149.5,54.5L150.5,58.8L151.5,62.7L152.5,66.5L153.5,70.0L154.5,73.3L155.5,76.5L156.5,79.4L157.5,82.3L158.5,84.9L159.5,87.5L160.5,89.9L161.5,92.3L162.5,94.5L163.5,96.6L164.5,98.7L165.5,100.7L166.5,102.6L167.5,104.5L168.5,106.3L169.5,108.1L170.5,109.8L171.5,111.4L172.5,113.0L173.5,114.6L174.5,116.1L175.5,117.7L176.5,119.1L177.5,120.6L178.5,122.0L179.5,123.4L180.5,124.7L181.5,126.1L182.5,127.4L183.5,128.7L184.5,129.9L185.5,131.2L186.5,132.4L187.5,133.6L188.5,134.7L189.5,135.9L190.5,137.0L191.5,138.1L192.5,139.2L193.5,140.2L194.5,141.3L195.5,142.3L196.5,143.3L197.5,144.2L198.5,145.2L199.5,146.1L200.5,147.0L201.5,147.9L202.5,148.8L203.5,149.6L204.5,150.4L205.5,151.2L206.5,152.0L207.5,152.8L208.5,153.5L209.5,154.3L210.5,155.0L211.5,155.7L212.5,156.3L213.5,157.0L214.5,157.6L215.5,158.2L216.5,158.8L217.5,159.4L218.5,160.0L219.5,160.6L220.5,161.1L221.5,161.6L222.5,162.1L223.5,162.6L224.5,163.1L225.5,163.6L226.5,164.0L227.5,164.5L228.5,164.9L229.5,165.3L230.5,165.7L231.5,166.1L232.5,166.5L233.5,166.8L234.5,167.2L235.5,167.6L236.5,167.9L237.5,168.2L238.5,168.5L239.5,168.8L240.5,169.1L241.5,169.4L242.5,169.7L243.5,170.0L244.5,170.3L245.5,170.5L246.5,170.8L247.5,171.0L248.5,171.3L249.5,171.5L250.5,171.7L251.5,171.9L252.5,172.1L253.5,172.3L254.5,172.5L255.5,172.7L256.5,172.9L257.5,173.1L258.5,173.3L259.5,173.5L260.5,173.6L261.5,173.8L262.5,173.9L263.5,174.1L264.5,174.2L265.5,174.4L266.5,174.5L267.5,174.7L268.5,174.8L269.5,174.9L270.5,175.0L271.5,175.2L272.5,175.3L273.5,175.4L274.5,175.5L275.5,175.6L276.5,175.7L277.5,175.8L278.5,175.9L279.5,176.0L280.5,176.1L281.5,176.2L282.5,176.3L283.5,176.4L284.5,176.5L285.5,176.5L286.5,176.6L287.5,176.7L288.5,176.8L289.5,176.8L290.5,176.9L291.5,177.0L292.5,177.1L293.5,177.1L294.5,177.2L295.5,177.2L296.5,177.3L297.5,177.4L298.5,177.4L299.5,177.5L300.5,177.5L301.5,177.6L302.5,177.6L303.5,177.7L304.5,177.7L305.5,177.8L306.5,177.8L307.5,177.9L308.5,177.9L309.5,177.9L310.5,178.0L311.5,178.0L312.5,178.1L313.5,178.1L314.5,178.1L315.5,178.2L316.5,178.2L317.5,178.2L318.5,178.3L319.5,178.3L320.5,178.3L321.5,178.4L322.5,178.4L323.5,178.4L324.5,178.5L325.5,178.5L326.5,178.5L327.5,178.5L328.5,178.6L329.5,178.6L330.5,178.6L331.5,178.6L332.5,178.7L333.5,178.7L334.5,178.7L335.5,178.7L336.5,178.7L337.5,178.8L338.5,178.8L339.5,178.8L340.5,178.8L341.5,178.8L342.5,178.9L343.5,178.9L344.5,178.9L345.5,178.9L346.5,178.9L347.5,178.9L348.5,178.9L349.5,179.0L350.5,179.0L351.5,179.0L352.5,179.0L353.5,179.0L354.5,179.0L355.5,179.0L356.5,179.1L357.5,179.1L358.5,179.1L359.5,179.1L360.5,179.1L361.5,179.1L362.5,179.1L363.5,179.1L364.5,179.1L365.5,179.1L366.5,179.2L367.5,179.2L368.5,179.2L369.5,179.2L370.5,179.2L371.5,179.2L372.5,179.2L373.5,179.2L374.5,179.2L375.5,179.2L376.5,179.2L377.5,179.2L378.5,179.2L379.5,179.3L380.5,179.3L381.5,179.3L382.5,179.3L383.5,179.3L384.5,179.3L385.5,179.3L386.5,179.3L387.5,179.3L388.5,179.3L389.5,179.3L390.5,179.3L391.5,179.3L392.5,179.3L393.5,179.3L394.5,179.3L395.5,179.3L396.5,179.3L397.5,179.3L398.5,179.4L399.5,179.4L400.5,179.4L401.5,179.4L402.5,179.4L403.5,179.4L404.5,179.4L405.5,179.4L406.5,179.4L407.5,179.4L408.5,179.4L409.5,179.4L410.5,179.4L411.5,179.4L412.5,179.4L413.5,179.4L414.5,179.4L415.5,179.4L416.5,179.4L417.5,179.4L418.5,179.4L419.5,179.4L420.5,179.4L421.5,179.4L422.5,179.4L423.5,179.4L424.5,179.4L425.5,179.4L426.5,179.4L427.5,179.4L428.5,179.4L429.5,179.4L430.5,179.4L431.5,179.4L432.5,179.4L433.5,179.4L434.5,179.4L435.5,179.4L436.5,179.4L437.5,179.4L438.5,179.4L439.5,179.4L440.5,179.5L441.5,179.5L442.5,179.5L443.5,179.5L444.5,179.5L445.5,179.5L446.5,179.5L447.5,179.5L448.5,179.5L449.5,179.5L450.5,179.5L451.5,179.5L452.5,179.5L453.5,179.5L454.5,179.5L455.5,179.5L456.5,179.5L457.5,179.5L458.5,179.5L459.5,179.5" stroke="#ff0000" fill="none" stroke-width="1" shape-rendering="crispEdges"/><path d="M-0.5,138.4L0.5,138.4L1.5,138.4L2.5,138.4L3.5,138.4L4.5,138.4L5.5,138.4L6.5,138.4L7.5,138.4L8.5,138.4L9.5,138.4L10.5,138.3L11.5,138.3L12.5,138.3L13.5,138.3L14.5,138.3L15.5,138.3L16.5,138.3L17.5,138.3L18.5,138.2L19.5,138.2L20.5,138.2L21.5,138.2L22.5,138.2L23.5,138.2L24.5,138.2L25.5,138.1L26.5,138.1L27.5,138.1L28.5,138.1L29.5,138.1L30.5,138.1L31.5,138.0L32.5,138.0L33.5,138.0L34.5,138.0L35.5,138.0L36.5,137.9L37.5,137.9L38.5,137.9L39.5,137.9L40.5,137.9L41.5,137.8L42.5,137.8L43.5,137.8L44.5,137.8L45.5,137.7L46.5,137.7L47.5,137.7L48.5,137.7L49.5,137.6L50.5,137.6L51.5,137.6L52.5,137.5L53.5,137.5L54.5,137.5L55.5,137.5L56.5,137.4L57.5,137.4L58.5,137.4L59.5,137.3L60.5,137.3L61.5,137.2L62.5,137.2L63.5,137.2L64.5,137.1L65.5,137.1L66.5,137.0L67.5,137.0L68.5,137.0L69.5,136.9L70.5,136.9L71.5,136.8L72.5,136.8L73.5,136.7L74.5,136.7L75.5,136.6L76.5,136.6L77.5,136.5L78.5,136.5L79.5,136.4L80.5,136.4L81.5,136.3L82.5,136.2L83.5,136.2L84.5,136.1L85.5,136.1L86.5,136.0L87.5,135.9L88.5,135.9L89.5,135.8L90.5,135.7L91.5,135.7L92.5,135.6L93.5,135.5L94.5,135.4L95.5,135.4L96.5,135.3L97.5,135.2L98.5,135.1L99.5,135.0L100.5,135.0L101.5,134.9L102.5,134.8L103.5,134.7L104.5,134.6L105.5,134.5L106.5,134.4L107.5,134.3L108.5,134.3L109.5,134.2L110.5,134.1L111.5,134.0L112.5,133.9L113.5,133.8L114.5,133.7L115.5,133.6L116.5,133.5L117.5,133.4L118.5,133.3L119.5,133.2L120.5,133.1L121.5,133.0L122.5,132.9L123.5,132.8L124.5,132.7L125.5,132.6L126.5,132.5L127.5,132.4L128.5,132.3L129.5,132.2L130.5,132.1L131.5,132.0L132.5,131.9L133.5,131.8L134.5,131.7L135.5,131.7L136.5,131.6L137.5,131.5L138.5,131.4L139.5,131.4L140.5,131.3L141.5,131.2L142.5,131.2L143.5,131.1L144.5,131.1L145.5,131.1L146.5,131.0L147.5,131.0L148.5,131.0L149.5,131.0L150.5,131.0L151.5,131.0L152.5,131.1L153.5,131.1L154.5,131.1L155.5,131.2L156.5,131.3L157.5,131.3L158.5,131.4L159.5,131.6L160.5,131.7L161.5,131.8L162.5,132.0L163.5,132.1L164.5,132.3L165.5,132.5L166.5,132.7L167.5,133.0L168.5,133.2L169.5,133.5L170.5,133.8L171.5,134.1L172.5,134.4L173.5,134.7L174.5,135.1L175.5,135.5L176.5,135.9L177.5,136.3L178.5,136.7L179.5,137.1L180.5,137.6L181.5,138.0L182.5,138.5L183.5,139.0L184.5,139.5L185.5,140.1L186.5,140.6L187.5,141.2L188.5,141.7L189.5,142.3L190.5,142.9L191.5,143.5L192.5,144.0L193.5,144.7L194.5,145.3L195.5,145.9L196.5,146.5L197.5,147.1L198.5,147.7L199.5,148.4L200.5,149.0L201.5,149.6L202.5,150.2L203.5,150.8L204.5,151.5L205.5,152.1L206.5,152.7L207.5,153.3L208.5,153.9L209.5,154.5L210.5,155.1L211.5,155.6L212.5,156.2L213.5,156.8L214.5,157.3L215.5,157.9L216.5,158.4L217.5,159.0L218.5,159.5L219.5,160.0L220.5,160.5L221.5,161.0L222.5,161.5L223.5,161.9L224.5,162.4L225.5,162.9L226.5,163.3L227.5,163.7L228.5,164.2L229.5,164.6L230.5,165.0L231.5,165.4L232.5,165.8L233.5,166.1L234.5,166.5L235.5,166.9L236.5,167.2L237.5,167.5L238.5,167.9L239.5,168.2L240.5,168.5L241.5,168.8L242.5,169.1L243.5,169.4L244.5,169.7L245.5,170.0L246.5,170.2L247.5,170.5L248.5,170.7L249.5,171.0L250.5,171.2L251.5,171.4L252.5,171.7L253.5,171.9L254.5,172.1L255.5,172.3L256.5,172.5L257.5,172.7L258.5,172.9L259.5,173.1L260.5,173.2L261.5,173.4L262.5,173.6L263.5,173.8L264.5,173.9L265.5,174.1L266.5,174.2L267.5,174.4L268.5,174.5L269.5,174.6L270.5,174.8L271.5,174.9L272.5,175.0L273.5,175.2L274.5,175.3L275.5,175.4L276.5,175.5L277.5,175.6L278.5,175.7L279.5,175.8L280.5,175.9L281.5,176.0L282.5,176.1L283.5,176.2L284.5,176.3L285.5,176.4L286.5,176.5L287.5,176.5L288.5,176.6L289.5,176.7L290.5,176.8L291.5,176.9L292.5,176.9L293.5,177.0L294.5,177.1L295.5,177.1L296.5,177.2L297.5,177.3L298.5,177.3L299.5,177.4L300.5,177.4L301.5,177.5L302.5,177.5L303.5,177.6L304.5,177.6L305.5,177.7L306.5,177.7L307.5,177.8L308.5,177.8L309.5,177.9L310.5,177.9L311.5,178.0L312.5,178.0L313.5,178.0L314.5,178.1L315.5,178.1L316.5,178.2L317.5,178.2L318.5,178.2L319.5,178.3L320.5,178.3L321.5,178.3L322.5,178.4L323.5,178.4L324.5,178.4L325.5,178.4L326.5,178.5L327.5,178.5L328.5,178.5L329.5,178.5L330.5,178.6L331.5,178.6L332.5,178.6L333.5,178.6L334.5,178.7L335.5,178.7L336.5,178.7L337.5,178.7L338.5,178.8L339.5,178.8L340.5,178.8L341.5,178.8L342.5,178.8L343.5,178.8L344.5,178.9L345.5,178.9L346.5,178.9L347.5,178.9L348.5,178.9L349.5,178.9L350.5,179.0L351.5,179.0L352.5,179.0L353.5,179.0L354.5,179.0L355.5,179.0L356.5,179.0L357.5,179.0L358.5,179.1L359.5,179.1L360.5,179.1L361.5,179.1L362.5,179.1L363.5,179.1L364.5,179.1L365.5,179.1L366.5,179.1L367.5,179.2L368.5,179.2L369.5,179.2L370.5,179.2L371.5,179.2L372.5,179.2L373.5,179.2L374.5,179.2L375.5,179.2L376.5,179.2L377.5,179.2L378.5,179.2L379.5,179.2L380.5,179.3L381.5,179.3L382.5,179.3L383.5,179.3L384.5,179.3L385.5,179.3L386.5,179.3L387.5,179.3L388.5,179.3L389.5,179.3L390.5,179.3L391.5,179.3L392.5,179.3L393.5,179.3L394.5,179.3L395.5,179.3L396.5,179.3L397.5,179.3L398.5,179.3L399.5,179.3L400.5,179.4L401.5,179.4L402.5,179.4L403.5,179.4L404.5,179.4L405.5,179.4L406.5,179.4L407.5,179.4L408.5,179.4L409.5,179.4L410.5,179.4L411.5,179.4L412.5,179.4L413.5,179.4L414.5,179.4L415.5,179.4L416.5,179.4L417.5,179.4L418.5,179.4L419.5,179.4L420.5,179.4L421.5,179.4L422.5,179.4L423.5,179.4L424.5,179.4L425.5,179.4L426.5,179.4L427.5,179.4L428.5,179.4L429.5,179.4L430.5,179.4L431.5,179.4L432.5,179.4L433.5,179.4L434.5,179.4L435.5,179.4L436.5,179.4L437.5,179.4L438.5,179.4L439.5,179.4L440.5,179.4L441.5,179.4L442.5,179.5L443.5,179.5L444.5,179.5L445.5,179.5L446.5,179.5L447.5,179.5L448.5,179.5L449.5,179.5L450.5,179.5L451.5,179.5L452.5,179.5L453.5,179.5L454.5,179.5L455.5,179.5L456.5,179.5L457.5,179.5L458.5,179.5L459.5,179.5" stroke="#ff00ff" fill="none" stroke-width="1" shape-rendering="crispEdges"/></svg>
<div style="left:574px;top:522px;width:1px;height:2px;background:#808080;"></div>
<div style="left:586px;top:522px;width:1px;height:2px;background:#808080;"></div>
<div style="left:596px;top:522px;width:1px;height:2px;background:#808080;"></div>
<div style="left:605px;top:522px;width:1px;height:2px;background:#808080;"></div>
<div style="left:613px;top:522px;width:1px;height:2px;background:#808080;"></div>
<div style="left:666px;top:522px;width:1px;height:2px;background:#808080;"></div>
<div style="left:697px;top:522px;width:1px;height:2px;background:#808080;"></div>
<div style="left:720px;top:522px;width:1px;height:2px;background:#808080;"></div>
<div style="left:737px;top:522px;width:1px;height:2px;background:#808080;"></div>
<div style="left:751px;top:522px;width:1px;height:2px;background:#808080;"></div>
<div style="left:763px;top:522px;width:1px;height:2px;background:#808080;"></div>
<div style="left:773px;top:522px;width:1px;height:2px;background:#808080;"></div>
<div style="left:782px;top:522px;width:1px;height:2px;background:#808080;"></div>
<div style="left:790px;top:522px;width:1px;height:2px;background:#808080;"></div>
<div style="left:843px;top:522px;width:1px;height:2px;background:#808080;"></div>
<div style="left:874px;top:522px;width:1px;height:2px;background:#808080;"></div>
<div style="left:896px;top:522px;width:1px;height:2px;background:#808080;"></div>
<div style="left:913px;top:522px;width:1px;height:2px;background:#808080;"></div>
<div style="left:927px;top:522px;width:1px;height:2px;background:#808080;"></div>
<div style="left:939px;top:522px;width:1px;height:2px;background:#808080;"></div>
<div style="left:949px;top:522px;width:1px;height:2px;background:#808080;"></div>
<div style="left:958px;top:522px;width:1px;height:2px;background:#808080;"></div>
<div style="left:966px;top:522px;width:1px;height:2px;background:#808080;"></div>
<div style="left:560px;top:705px;width:1px;height:3px;background:#fff;"></div>
<div style="left:574px;top:705px;width:1px;height:3px;background:#fff;"></div>
<div style="left:586px;top:705px;width:1px;height:3px;background:#fff;"></div>
<div style="left:596px;top:705px;width:1px;height:3px;background:#fff;"></div>
<div style="left:605px;top:705px;width:1px;height:3px;background:#fff;"></div>
<div style="left:613px;top:705px;width:1px;height:3px;background:#fff;"></div>
<div style="left:666px;top:705px;width:1px;height:3px;background:#fff;"></div>
<div style="left:697px;top:705px;width:1px;height:3px;background:#fff;"></div>
<div style="left:720px;top:705px;width:1px;height:3px;background:#fff;"></div>
<div style="left:737px;top:705px;width:1px;height:3px;background:#fff;"></div>
<div style="left:751px;top:705px;width:1px;height:3px;background:#fff;"></div>
<div style="left:763px;top:705px;width:1px;height:3px;background:#fff;"></div>
<div style="left:773px;top:705px;width:1px;height:3px;background:#fff;"></div>
<div style="left:782px;top:705px;width:1px;height:3px;background:#fff;"></div>
<div style="left:790px;top:705px;width:1px;height:3px;background:#fff;"></div>
<div style="left:843px;top:705px;width:1px;height:3px;background:#fff;"></div>
<div style="left:874px;top:705px;width:1px;height:3px;background:#fff;"></div>
<div style="left:896px;top:705px;width:1px;height:3px;background:#fff;"></div>
<div style="left:913px;top:705px;width:1px;height:3px;background:#fff;"></div>
<div style="left:927px;top:705px;width:1px;height:3px;background:#fff;"></div>
<div style="left:939px;top:705px;width:1px;height:3px;background:#fff;"></div>
<div style="left:949px;top:705px;width:1px;height:3px;background:#fff;"></div>
<div style="left:958px;top:705px;width:1px;height:3px;background:#fff;"></div>
<div style="left:966px;top:705px;width:1px;height:3px;background:#fff;"></div>
<div style="left:1019px;top:705px;width:1px;height:3px;background:#fff;"></div>
<div style="left:556px;top:523px;width:3px;height:1px;background:#fff;"></div>
<div style="left:1021px;top:523px;width:3px;height:1px;background:#fff;"></div>
<div style="left:556px;top:543px;width:3px;height:1px;background:#fff;"></div>
<div style="left:1021px;top:543px;width:3px;height:1px;background:#fff;"></div>
<div style="left:556px;top:563px;width:3px;height:1px;background:#fff;"></div>
<div style="left:1021px;top:563px;width:3px;height:1px;background:#fff;"></div>
<div style="left:556px;top:583px;width:3px;height:1px;background:#fff;"></div>
<div style="left:1021px;top:583px;width:3px;height:1px;background:#fff;"></div>
<div style="left:556px;top:603px;width:3px;height:1px;background:#fff;"></div>
<div style="left:1021px;top:603px;width:3px;height:1px;background:#fff;"></div>
<div style="left:556px;top:623px;width:3px;height:1px;background:#fff;"></div>
<div style="left:1021px;top:623px;width:3px;height:1px;background:#fff;"></div>
<div style="left:556px;top:643px;width:3px;height:1px;background:#fff;"></div>
<div style="left:1021px;top:643px;width:3px;height:1px;background:#fff;"></div>
<div style="left:556px;top:663px;width:3px;height:1px;background:#fff;"></div>
<div style="left:1021px;top:663px;width:3px;height:1px;background:#fff;"></div>
<div style="left:556px;top:683px;width:3px;height:1px;background:#fff;"></div>
<div style="left:1021px;top:683px;width:3px;height:1px;background:#fff;"></div>
<div style="left:556px;top:703px;width:3px;height:1px;background:#fff;"></div>
<div style="left:1021px;top:703px;width:3px;height:1px;background:#fff;"></div>
<div class="t " style="left:526px;top:516px;width:27px;height:16px;line-height:16px;text-align:right;font-size:12.5px;color:#fff;letter-spacing:0">ms</div>
<div class="t " style="left:526px;top:536px;width:27px;height:16px;line-height:16px;text-align:right;font-size:11.5px;color:#fff;letter-spacing:0">16</div>
<div class="t " style="left:526px;top:556px;width:27px;height:16px;line-height:16px;text-align:right;font-size:11.5px;color:#fff;letter-spacing:0">14</div>
<div class="t " style="left:526px;top:576px;width:27px;height:16px;line-height:16px;text-align:right;font-size:11.5px;color:#fff;letter-spacing:0">12</div>
<div class="t " style="left:526px;top:596px;width:27px;height:16px;line-height:16px;text-align:right;font-size:11.5px;color:#fff;letter-spacing:0">10</div>
<div class="t " style="left:526px;top:616px;width:27px;height:16px;line-height:16px;text-align:right;font-size:11.5px;color:#fff;letter-spacing:0">8</div>
<div class="t " style="left:526px;top:636px;width:27px;height:16px;line-height:16px;text-align:right;font-size:11.5px;color:#fff;letter-spacing:0">6</div>
<div class="t " style="left:526px;top:656px;width:27px;height:16px;line-height:16px;text-align:right;font-size:11.5px;color:#fff;letter-spacing:0">4</div>
<div class="t " style="left:526px;top:676px;width:27px;height:16px;line-height:16px;text-align:right;font-size:11.5px;color:#fff;letter-spacing:0">2</div>
<div class="t " style="left:526px;top:696px;width:27px;height:16px;line-height:16px;text-align:right;font-size:11.5px;color:#fff;letter-spacing:0">0</div>
<div class="t " style="left:593px;top:710px;width:41px;height:14px;line-height:14px;text-align:center;font-size:12px;color:#fff;letter-spacing:0">10</div>
<div class="t " style="left:717px;top:710px;width:41px;height:14px;line-height:14px;text-align:center;font-size:12px;color:#fff;letter-spacing:0">50</div>
<div class="t " style="left:770px;top:710px;width:41px;height:14px;line-height:14px;text-align:center;font-size:12px;color:#fff;letter-spacing:0">100</div>
<div class="t " style="left:893px;top:710px;width:41px;height:14px;line-height:14px;text-align:center;font-size:12px;color:#fff;letter-spacing:0">500</div>
<div class="t " style="left:945px;top:710px;width:41px;height:14px;line-height:14px;text-align:center;font-size:12px;color:#fff;letter-spacing:0">1000</div>
<div class="t " style="left:558px;top:710px;width:40px;height:14px;line-height:14px;text-align:left;font-size:12px;color:#fff;letter-spacing:-0.2px">5 Hz</div>
<div class="t " style="left:982px;top:710px;width:40px;height:14px;line-height:14px;text-align:right;font-size:12px;color:#fff;letter-spacing:0">2000</div>
</body></html>
